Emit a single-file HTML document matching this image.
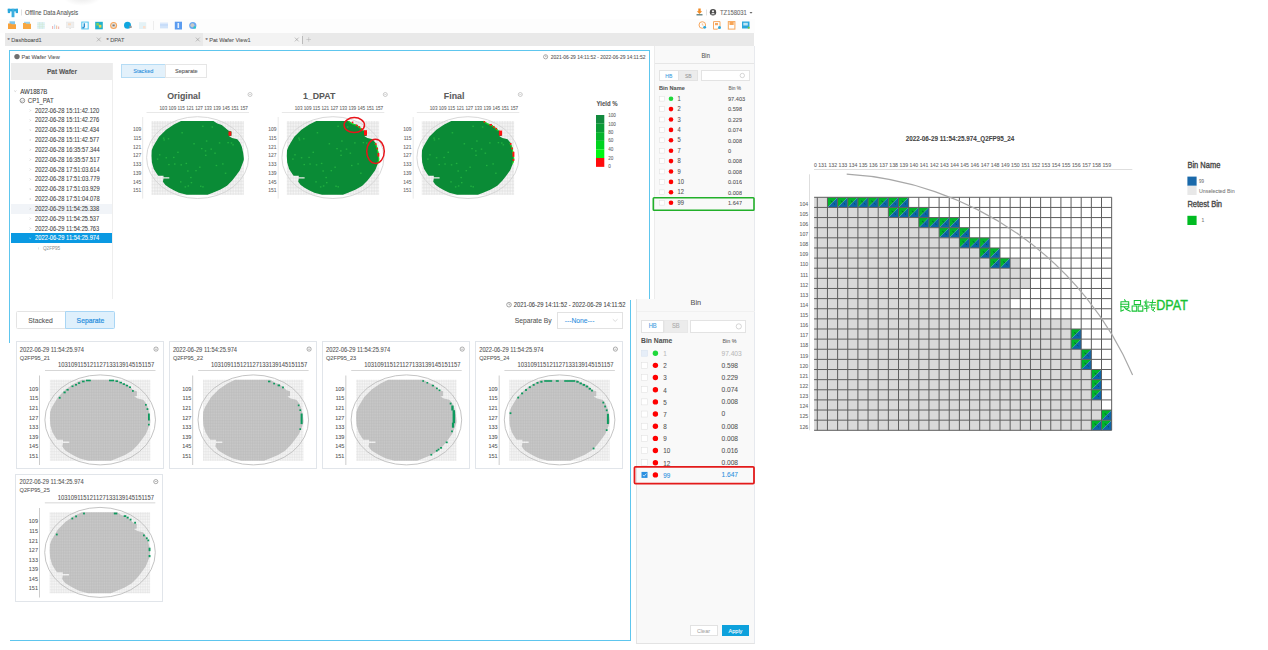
<!DOCTYPE html><html><head><meta charset="utf-8"><style>
html,body{margin:0;padding:0;}
body{width:1268px;height:650px;overflow:hidden;position:relative;background:#fff;font-family:"Liberation Sans",sans-serif;}
.t{position:absolute;white-space:nowrap;-webkit-text-stroke:0.07px currentColor;transform:scaleY(1.1);transform-origin:50% 55%;}
.r{position:absolute;}
svg{position:absolute;left:0;top:0;}
</style></head><body>
<div class="r" style="left:62px;top:-14px;width:40px;height:20px;border-radius:50%;background:radial-gradient(ellipse at center, rgba(0,0,0,0.10), rgba(0,0,0,0) 70%);"></div>
<svg width="1268" height="650" style="position:absolute;left:0;top:0"><rect x="7.8" y="8.8" width="10.2" height="2.6" fill="#2aa7dc"/><rect x="11.6" y="8.8" width="2.8" height="8.4" fill="#2aa7dc"/><rect x="7.8" y="8.8" width="2.3" height="4.3" fill="#2aa7dc"/><rect x="15.7" y="8.8" width="2.3" height="4.3" fill="#2aa7dc"/><rect x="12.9" y="8.8" width="0.25" height="8.4" fill="#bfe5f5"/><rect x="21" y="9.5" width="0.6" height="6" fill="#ccc"/></svg>
<div class="t" style="left:25px;top:9.83px;font-size:5.78px;color:#555;font-weight:normal;line-height:6.94px;">Offline Data Analysis</div>
<div class="r" style="left:0px;top:18.6px;width:755px;height:14.6px;background:#fdfdfd;"></div>
<svg width="1268" height="650" style="position:absolute;left:0;top:0"><path d="M698.3 8.6 h2.4 v2.6 h1.5 l-2.7 2.7 l-2.7 -2.7 h1.5z" fill="#f08a24"/><rect x="696.5" y="14.2" width="6" height="1.2" fill="#4a7070"/><rect x="706.3" y="9.5" width="0.6" height="6" fill="#ccc"/><circle cx="713" cy="12.3" r="3.2" fill="#4d4d4d"/><circle cx="713" cy="11.3" r="1.1" fill="#f4f4f4"/><path d="M710.9 14.2 q2.1 -2.6 4.2 0z" fill="#f4f4f4"/><path d="M749.5 12 h3 l-1.5 1.8z" fill="#666"/></svg>
<div class="t" style="left:720px;top:9.68px;font-size:5.87px;color:#666;font-weight:normal;line-height:7.04px;">TZ158031</div>
<svg width="1268" height="650" style="position:absolute;left:0;top:0"><rect x="9.5" y="21.3" width="5.5" height="3.5" fill="#7cc6ee"/><path d="M8 23.5 h3 l0.8 0.8 h4.2 v4.8 h-8z" fill="#f7a13a"/><rect x="24" y="21.8" width="6" height="2.5" fill="#9ad3ee"/><path d="M23 23 h2.5 l0.8 0.8 h4.7 v5.2 h-8z" fill="#f7a741"/><rect x="37.2" y="22" width="7.6" height="7" fill="#dff1f8"/><path d="M39.7 22 v7 M42.3 22 v7 M37.2 24.3 h7.6 M37.2 26.7 h7.6" stroke="#cde8c8" stroke-width="0.5"/><rect x="52" y="26" width="1.2" height="3" fill="#f1b8b8"/><rect x="54" y="24.5" width="1.2" height="4.5" fill="#c9dcef"/><rect x="56" y="25.5" width="1.2" height="3.5" fill="#f3c9a9"/><rect x="58" y="26.5" width="1.2" height="2.5" fill="#f1b8b8"/><rect x="66.3" y="22" width="7.6" height="5.8" fill="#eeeeee" stroke="#e0e0e0" stroke-width="0.4"/><rect x="68" y="23.3" width="3" height="2" fill="#f7dcc4"/><rect x="69.3" y="28" width="1.6" height="1" fill="#e3e3e3"/><rect x="81.3" y="21.6" width="7.4" height="7.8" fill="#48c3ef"/><rect x="82.3" y="22.5" width="5.4" height="6" fill="#f4fbfe"/><rect x="83.6" y="23.3" width="1.4" height="4" fill="#2a8fd0"/><rect x="82.3" y="26.8" width="2" height="1.7" fill="#2a8fd0"/><rect x="95.2" y="21.8" width="7.6" height="7.5" fill="#1fb0cf"/><rect x="96.3" y="23" width="2.6" height="2.6" fill="#7ccf5a"/><rect x="98.8" y="24.8" width="2.6" height="2.8" fill="#e6d84a"/><circle cx="113.6" cy="25.5" r="3.5" fill="#f7a55a"/><circle cx="113.6" cy="25.5" r="2.4" fill="#e8e2da"/><rect x="112.5" y="24.5" width="2.2" height="1.8" fill="#777"/><circle cx="127.5" cy="25.3" r="3.5" fill="#10a6df"/><rect x="129.3" y="25.8" width="2.4" height="2.2" fill="#9a9a9a"/><rect x="139" y="22.2" width="7.2" height="6.8" fill="#e4f2f6"/><rect x="143" y="26" width="2.5" height="2.5" fill="#fbe0cf"/><rect x="153.2" y="21" width="0.6" height="9" fill="#e3e3e3"/><rect x="160" y="22.5" width="8" height="6" fill="#dbe9fc"/><rect x="160" y="24.5" width="8" height="1" fill="#b6d2f6"/><rect x="160" y="26.6" width="8" height="0.8" fill="#c6dcf8"/><rect x="174.8" y="21.7" width="7.2" height="7.8" fill="#5b9cf0"/><rect x="177.5" y="23" width="1.6" height="5" fill="#e6f0fd"/><circle cx="192.8" cy="25.5" r="3.6" fill="#6aa8f2"/><circle cx="192.4" cy="25.3" r="2" fill="#c8c8c8"/><rect x="193.5" y="26.5" width="2.4" height="2" fill="#2cc9c0"/><circle cx="702.3" cy="25" r="3.3" fill="none" stroke="#f7a860" stroke-width="1"/><path d="M702.3 23.3 v1.8 h1.3" stroke="#f7a860" stroke-width="0.6" fill="none"/><circle cx="704.7" cy="27.3" r="1.4" fill="#2aa7dc"/><path d="M713.5 21.6 h6.5 v5 l-2.5 2.6 h-4z" fill="none" stroke="#f7a860" stroke-width="1"/><rect x="715" y="23" width="3" height="2.2" fill="#f7a860"/><circle cx="719.5" cy="27.5" r="1.5" fill="#2aa7dc"/><rect x="728.3" y="21.6" width="6.6" height="7.5" fill="none" stroke="#f7a557" stroke-width="1"/><rect x="729.5" y="22" width="4.2" height="3" fill="#f7a557"/><rect x="742" y="21.5" width="7.5" height="7" fill="#2aa7dc"/><rect x="743.3" y="22.8" width="4.5" height="2.7" fill="#bfe6f6"/><rect x="747.8" y="26.8" width="1.8" height="1.8" fill="#7c3"/></svg>
<div class="r" style="left:5px;top:33.3px;width:749px;height:12.7px;background:#e9e9e9;"></div>
<div class="r" style="left:203.3px;top:33.3px;width:99px;height:12.7px;background:#f3f3f3;"></div>
<div class="t" style="left:7.5px;top:36.84px;font-size:5.6px;color:#555;font-weight:normal;line-height:6.72px;">* Dashboard1</div>
<div class="t" style="left:106.5px;top:36.84px;font-size:5.6px;color:#555;font-weight:normal;line-height:6.72px;">* DPAT</div>
<div class="t" style="left:205.5px;top:36.84px;font-size:5.6px;color:#555;font-weight:normal;line-height:6.72px;">* Pat Wafer View1</div>
<svg width="1268" height="650" style="position:absolute;left:0;top:0"><path d="M96.89999999999999 37.6 l3.8 3.8 M100.7 37.6 l-3.8 3.8" stroke="#8f8f8f" stroke-width="0.55"/><path d="M195.9 37.6 l3.8 3.8 M199.70000000000002 37.6 l-3.8 3.8" stroke="#8f8f8f" stroke-width="0.55"/><path d="M294.90000000000003 37.6 l3.8 3.8 M298.7 37.6 l-3.8 3.8" stroke="#8f8f8f" stroke-width="0.55"/><path d="M308.7 37.2 v4.6 M306.4 39.5 h4.6" stroke="#b0b0b0" stroke-width="0.5"/></svg>
<div class="r" style="left:302px;top:35.5px;width:0.7px;height:8px;background:#bbb;"></div>
<div class="r" style="left:9.2px;top:49.9px;width:641.2px;height:1.3px;background:#5ec6ee;border-top-left-radius:1.5px;border-top-right-radius:1.5px;"></div>
<div class="r" style="left:9.2px;top:49.9px;width:1.3px;height:293.5px;background:#5ec6ee;"></div>
<div class="r" style="left:649.2px;top:49.9px;width:1.3px;height:249.6px;background:#5ec6ee;"></div>
<svg width="1268" height="650" style="position:absolute;left:0;top:0"><circle cx="17" cy="56.6" r="2.7" fill="#707070"/></svg>
<div class="t" style="left:21.5px;top:54.44px;font-size:5.6px;color:#555;font-weight:normal;line-height:6.72px;">Pat Wafer View</div>
<div class="r" style="left:11px;top:63.3px;width:102px;height:16.7px;background:#ececec;"></div>
<div class="t" style="left:-238px;width:600px;text-align:center;top:68.44px;font-size:6.6px;color:#555;font-weight:bold;line-height:7.92px;">Pat Wafer</div>
<div class="r" style="left:112.3px;top:63.3px;width:0.8px;height:236px;background:#eee;"></div>
<svg width="1268" height="650" style="position:absolute;left:0;top:0"><path d="M14.2 90.6 l1.1 1 l1.1 -1" fill="none" stroke="#aaa" stroke-width="0.5"/></svg>
<div class="t" style="left:20.2px;top:87.94px;font-size:6.1px;color:#3a3a3a;font-weight:normal;line-height:7.32px;">AW1887B</div>
<svg width="1268" height="650" style="position:absolute;left:0;top:0"><circle cx="22.4" cy="100.6" r="2.3" fill="none" stroke="#8a8a8a" stroke-width="0.9"/><path d="M21.2 100.8 l0.9 0.9 l1.6 -1.8" stroke="#8a8a8a" stroke-width="0.6" fill="none"/></svg>
<div class="t" style="left:27.8px;top:97.60px;font-size:6px;color:#444;font-weight:normal;line-height:7.20px;">CP1_PAT</div>
<svg width="1268" height="650" style="position:absolute;left:0;top:0"><path d="M29.8 109.60 l0.9 0.9 l-0.9 0.9" fill="none" stroke="#b0b0b0" stroke-width="0.55"/></svg>
<div class="t" style="left:35.1px;top:107.65px;font-size:5.75px;color:#444;font-weight:normal;line-height:6.90px;">2022-06-28 15:11:42.120</div>
<svg width="1268" height="650" style="position:absolute;left:0;top:0"><path d="M29.8 119.43 l0.9 0.9 l-0.9 0.9" fill="none" stroke="#b0b0b0" stroke-width="0.55"/></svg>
<div class="t" style="left:35.1px;top:117.48px;font-size:5.75px;color:#444;font-weight:normal;line-height:6.90px;">2022-06-28 15:11:42.276</div>
<svg width="1268" height="650" style="position:absolute;left:0;top:0"><path d="M29.8 129.26 l0.9 0.9 l-0.9 0.9" fill="none" stroke="#b0b0b0" stroke-width="0.55"/></svg>
<div class="t" style="left:35.1px;top:127.31px;font-size:5.75px;color:#444;font-weight:normal;line-height:6.90px;">2022-06-28 15:11:42.434</div>
<svg width="1268" height="650" style="position:absolute;left:0;top:0"><path d="M29.8 139.09 l0.9 0.9 l-0.9 0.9" fill="none" stroke="#b0b0b0" stroke-width="0.55"/></svg>
<div class="t" style="left:35.1px;top:137.14px;font-size:5.75px;color:#444;font-weight:normal;line-height:6.90px;">2022-06-28 15:11:42.577</div>
<svg width="1268" height="650" style="position:absolute;left:0;top:0"><path d="M29.8 148.92 l0.9 0.9 l-0.9 0.9" fill="none" stroke="#b0b0b0" stroke-width="0.55"/></svg>
<div class="t" style="left:35.1px;top:146.97px;font-size:5.75px;color:#444;font-weight:normal;line-height:6.90px;">2022-06-28 16:35:57.344</div>
<svg width="1268" height="650" style="position:absolute;left:0;top:0"><path d="M29.8 158.75 l0.9 0.9 l-0.9 0.9" fill="none" stroke="#b0b0b0" stroke-width="0.55"/></svg>
<div class="t" style="left:35.1px;top:156.80px;font-size:5.75px;color:#444;font-weight:normal;line-height:6.90px;">2022-06-28 16:35:57.517</div>
<svg width="1268" height="650" style="position:absolute;left:0;top:0"><path d="M29.8 168.58 l0.9 0.9 l-0.9 0.9" fill="none" stroke="#b0b0b0" stroke-width="0.55"/></svg>
<div class="t" style="left:35.1px;top:166.63px;font-size:5.75px;color:#444;font-weight:normal;line-height:6.90px;">2022-06-28 17:51:03.614</div>
<svg width="1268" height="650" style="position:absolute;left:0;top:0"><path d="M29.8 178.41 l0.9 0.9 l-0.9 0.9" fill="none" stroke="#b0b0b0" stroke-width="0.55"/></svg>
<div class="t" style="left:35.1px;top:176.46px;font-size:5.75px;color:#444;font-weight:normal;line-height:6.90px;">2022-06-28 17:51:03.779</div>
<svg width="1268" height="650" style="position:absolute;left:0;top:0"><path d="M29.8 188.24 l0.9 0.9 l-0.9 0.9" fill="none" stroke="#b0b0b0" stroke-width="0.55"/></svg>
<div class="t" style="left:35.1px;top:186.29px;font-size:5.75px;color:#444;font-weight:normal;line-height:6.90px;">2022-06-28 17:51:03.929</div>
<svg width="1268" height="650" style="position:absolute;left:0;top:0"><path d="M29.8 198.07 l0.9 0.9 l-0.9 0.9" fill="none" stroke="#b0b0b0" stroke-width="0.55"/></svg>
<div class="t" style="left:35.1px;top:196.12px;font-size:5.75px;color:#444;font-weight:normal;line-height:6.90px;">2022-06-28 17:51:04.078</div>
<div class="r" style="left:10.7px;top:204.0px;width:101.6px;height:9.5px;background:#f1f4f8;"></div>
<svg width="1268" height="650" style="position:absolute;left:0;top:0"><path d="M29.8 207.90 l0.9 0.9 l-0.9 0.9" fill="none" stroke="#b0b0b0" stroke-width="0.55"/></svg>
<div class="t" style="left:35.1px;top:205.95px;font-size:5.75px;color:#444;font-weight:normal;line-height:6.90px;">2022-06-29 11:54:25.338</div>
<svg width="1268" height="650" style="position:absolute;left:0;top:0"><path d="M29.8 217.73 l0.9 0.9 l-0.9 0.9" fill="none" stroke="#b0b0b0" stroke-width="0.55"/></svg>
<div class="t" style="left:35.1px;top:215.78px;font-size:5.75px;color:#444;font-weight:normal;line-height:6.90px;">2022-06-29 11:54:25.537</div>
<svg width="1268" height="650" style="position:absolute;left:0;top:0"><path d="M29.8 227.56 l0.9 0.9 l-0.9 0.9" fill="none" stroke="#b0b0b0" stroke-width="0.55"/></svg>
<div class="t" style="left:35.1px;top:225.61px;font-size:5.75px;color:#444;font-weight:normal;line-height:6.90px;">2022-06-29 11:54:25.763</div>
<div class="r" style="left:10.7px;top:233.49px;width:101.6px;height:9.8px;background:#0a99e2;"></div>
<svg width="1268" height="650" style="position:absolute;left:0;top:0"><path d="M29.2 237.89 l1 0.9 l1 -0.9" fill="none" stroke="#d8eefa" stroke-width="0.55"/></svg>
<div class="t" style="left:35.1px;top:235.44px;font-size:5.75px;color:#fff;font-weight:normal;line-height:6.90px;">2022-06-29 11:54:25.974</div>
<div class="t" style="left:43px;top:246.24px;font-size:4.6px;color:#999;font-weight:normal;line-height:5.52px;">Q2FP95</div>
<svg width="1268" height="650" style="position:absolute;left:0;top:0"><path d="M38.2 247.6 l0.8 0.8 l-0.8 0.8" fill="none" stroke="#bbb" stroke-width="0.5"/></svg>
<div class="r" style="left:121px;top:63.5px;width:44.5px;height:14.5px;background:#e3f1fb;border:0.8px solid #b5dcf5;box-sizing:border-box;"></div>
<div class="r" style="left:165.3px;top:63.5px;width:42px;height:14.5px;background:#fff;border:0.8px solid #e6e6e6;box-sizing:border-box;"></div>
<div class="t" style="left:-156.7px;width:600px;text-align:center;top:68.24px;font-size:5.6px;color:#2a8fdc;font-weight:normal;line-height:6.72px;">Stacked</div>
<div class="t" style="left:-113.69999999999999px;width:600px;text-align:center;top:68.24px;font-size:5.6px;color:#555;font-weight:normal;line-height:6.72px;">Separate</div>
<svg width="1268" height="650" style="position:absolute;left:0;top:0"><circle cx="545.6" cy="56.8" r="2.1" fill="none" stroke="#777" stroke-width="0.6"/><path d="M545.6 55.5 v1.3 h1" stroke="#777" stroke-width="0.5" fill="none"/></svg>
<div class="t" style="left:45.5px;width:600px;text-align:right;top:54.54px;font-size:4.93px;color:#555;font-weight:normal;line-height:5.92px;">2021-06-29 14:11:52 - 2022-06-29 14:11:52</div>
<svg width="1268" height="650" style="position:absolute;left:0;top:0"><defs>
<pattern id="fg" width="1.62" height="1.45" patternUnits="userSpaceOnUse"><rect width="1.62" height="1.45" fill="#f8f8f8"/><rect x="0" y="0" width="0.4" height="1.45" fill="#dcdcdc"/><rect x="0" y="0" width="1.62" height="0.35" fill="#dcdcdc"/></pattern>
<pattern id="gg" width="1.75" height="1.55" patternUnits="userSpaceOnUse"><rect width="1.75" height="1.55" fill="#c9c9c9"/><rect x="0" y="0" width="0.4" height="1.55" fill="#b9b9b9"/><rect x="0" y="0" width="1.75" height="0.35" fill="#b9b9b9"/></pattern>
<pattern id="fg2" width="1.75" height="1.55" patternUnits="userSpaceOnUse"><rect width="1.75" height="1.55" fill="#f8f8f8"/><rect x="0" y="0" width="0.4" height="1.55" fill="#dedede"/><rect x="0" y="0" width="1.75" height="0.35" fill="#dedede"/></pattern>
</defs><rect x="151.5" y="121.0" width="92.3" height="73.8" fill="url(#fg)"/><ellipse cx="197.6" cy="157.6" rx="51" ry="40.9" fill="none" stroke="#d4d4d4" stroke-width="0.9"/><path d="M181.00,121.00 L213.40,121.00 L217.30,123.50 L221.80,125.10 L225.10,127.70 L228.30,130.60 L231.50,131.60 L231.50,135.80 L229.00,136.30 L232.20,138.00 L237.30,139.30 L239.90,142.50 L241.90,147.10 L243.20,152.90 L243.80,158.00 L243.80,160.00 L242.50,163.80 L239.90,170.20 L236.10,175.40 L232.20,180.50 L227.00,185.70 L220.50,189.60 L212.80,192.80 L207.60,194.80 L186.80,194.80 L179.00,192.80 L173.80,190.20 L169.30,187.70 L165.40,185.10 L162.90,181.80 L163.50,178.60 L169.30,178.60 L169.30,177.30 L163.50,177.30 L163.50,175.70 L158.30,175.70 L157.00,174.10 L153.80,168.90 L151.90,162.50 L151.50,156.00 L151.70,150.30 L153.20,146.40 L155.80,141.90 L159.00,136.80 L166.10,129.70 L173.90,124.50 Z" fill="#0a8b36"/><rect x="181.39" y="132.13" width="1.5" height="1.3" fill="#22b040"/><rect x="211.58" y="126.35" width="1.5" height="1.3" fill="#22b040"/><rect x="200.96" y="147.99" width="1.5" height="1.3" fill="#22b040"/><rect x="156.85" y="158.45" width="1.5" height="1.3" fill="#22b040"/><rect x="190.68" y="182.02" width="1.5" height="1.3" fill="#22b040"/><rect x="162.93" y="137.48" width="1.5" height="1.3" fill="#22b040"/><rect x="204.77" y="150.28" width="1.5" height="1.3" fill="#22b040"/><rect x="230.74" y="142.37" width="1.5" height="1.3" fill="#22b040"/><rect x="179.97" y="181.23" width="1.5" height="1.3" fill="#22b040"/><rect x="168.18" y="163.92" width="1.5" height="1.3" fill="#22b040"/><rect x="210.47" y="148.48" width="1.5" height="1.3" fill="#22b040"/><rect x="202.06" y="125.63" width="1.5" height="1.3" fill="#22b040"/><rect x="214.30" y="152.56" width="1.5" height="1.3" fill="#22b040"/><rect x="180.50" y="164.21" width="1.5" height="1.3" fill="#22b040"/><rect x="193.33" y="143.12" width="1.5" height="1.3" fill="#22b040"/><rect x="224.82" y="172.59" width="1.5" height="1.3" fill="#22b040"/><rect x="174.03" y="163.39" width="1.5" height="1.3" fill="#22b040"/><rect x="199.98" y="185.59" width="1.5" height="1.3" fill="#22b040"/><rect x="218.83" y="142.25" width="1.5" height="1.3" fill="#22b040"/><rect x="190.09" y="176.88" width="1.5" height="1.3" fill="#22b040"/><rect x="165.53" y="157.09" width="1.5" height="1.3" fill="#22b040"/><rect x="222.07" y="163.29" width="1.5" height="1.3" fill="#22b040"/><rect x="232.31" y="144.15" width="1.5" height="1.3" fill="#22b040"/><rect x="215.68" y="164.86" width="1.5" height="1.3" fill="#22b040"/><rect x="205.02" y="154.67" width="1.5" height="1.3" fill="#22b040"/><rect x="195.26" y="170.01" width="1.5" height="1.3" fill="#22b040"/><rect x="227.36" y="142.00" width="1.5" height="1.3" fill="#22b040"/><rect x="187.11" y="170.35" width="1.5" height="1.3" fill="#22b040"/><rect x="163.44" y="139.27" width="1.5" height="1.3" fill="#22b040"/><rect x="187.58" y="185.31" width="1.5" height="1.3" fill="#22b040"/><rect x="158.94" y="154.15" width="1.5" height="1.3" fill="#22b040"/><rect x="202.21" y="186.19" width="1.5" height="1.3" fill="#22b040"/><rect x="177.20" y="151.65" width="1.5" height="1.3" fill="#22b040"/><rect x="184.61" y="186.25" width="1.5" height="1.3" fill="#22b040"/><rect x="167.76" y="138.12" width="1.5" height="1.3" fill="#22b040"/><rect x="173.04" y="156.79" width="1.5" height="1.3" fill="#22b040"/><rect x="205.88" y="140.39" width="1.5" height="1.3" fill="#22b040"/><rect x="185.58" y="162.80" width="1.5" height="1.3" fill="#22b040"/><rect x="199.08" y="166.58" width="1.5" height="1.3" fill="#22b040"/><rect x="228.5" y="131.5" width="2.8" height="4.2" fill="#ff1010"/><rect x="146.5" y="112.1" width="102.5" height="0.6" fill="#d9d9d9"/><rect x="142.5" y="117" width="0.6" height="81.6" fill="#d9d9d9"/><circle cx="250" cy="94.5" r="2" fill="none" stroke="#aaa" stroke-width="0.6"/><rect x="249" y="94.3" width="2" height="0.45" fill="#aaa"/></svg>
<div class="t" style="left:-116.19999999999999px;width:600px;text-align:center;top:91.22px;font-size:8.8px;color:#5a5a5a;font-weight:bold;line-height:10.56px;">Original</div>
<div class="t" style="left:-96.30000000000001px;width:600px;text-align:center;top:106.42px;font-size:4.63px;color:#666;font-weight:normal;line-height:5.56px;">103 109 115 121 127 133 139 145 151 157</div>
<div class="t" style="left:-458.8px;width:600px;text-align:right;top:127.16px;font-size:4.9px;color:#666;font-weight:normal;line-height:5.88px;">109</div>
<div class="t" style="left:-458.8px;width:600px;text-align:right;top:135.90px;font-size:4.9px;color:#666;font-weight:normal;line-height:5.88px;">115</div>
<div class="t" style="left:-458.8px;width:600px;text-align:right;top:144.64px;font-size:4.9px;color:#666;font-weight:normal;line-height:5.88px;">121</div>
<div class="t" style="left:-458.8px;width:600px;text-align:right;top:153.38px;font-size:4.9px;color:#666;font-weight:normal;line-height:5.88px;">127</div>
<div class="t" style="left:-458.8px;width:600px;text-align:right;top:162.12px;font-size:4.9px;color:#666;font-weight:normal;line-height:5.88px;">133</div>
<div class="t" style="left:-458.8px;width:600px;text-align:right;top:170.86px;font-size:4.9px;color:#666;font-weight:normal;line-height:5.88px;">139</div>
<div class="t" style="left:-458.8px;width:600px;text-align:right;top:179.60px;font-size:4.9px;color:#666;font-weight:normal;line-height:5.88px;">145</div>
<div class="t" style="left:-458.8px;width:600px;text-align:right;top:188.34px;font-size:4.9px;color:#666;font-weight:normal;line-height:5.88px;">151</div>
<svg width="1268" height="650" style="position:absolute;left:0;top:0"><defs>
<pattern id="fg" width="1.62" height="1.45" patternUnits="userSpaceOnUse"><rect width="1.62" height="1.45" fill="#f8f8f8"/><rect x="0" y="0" width="0.4" height="1.45" fill="#dcdcdc"/><rect x="0" y="0" width="1.62" height="0.35" fill="#dcdcdc"/></pattern>
<pattern id="gg" width="1.75" height="1.55" patternUnits="userSpaceOnUse"><rect width="1.75" height="1.55" fill="#c9c9c9"/><rect x="0" y="0" width="0.4" height="1.55" fill="#b9b9b9"/><rect x="0" y="0" width="1.75" height="0.35" fill="#b9b9b9"/></pattern>
<pattern id="fg2" width="1.75" height="1.55" patternUnits="userSpaceOnUse"><rect width="1.75" height="1.55" fill="#f8f8f8"/><rect x="0" y="0" width="0.4" height="1.55" fill="#dedede"/><rect x="0" y="0" width="1.75" height="0.35" fill="#dedede"/></pattern>
</defs><rect x="286.8" y="121.0" width="92.3" height="73.8" fill="url(#fg)"/><ellipse cx="332.9" cy="157.6" rx="51" ry="40.9" fill="none" stroke="#d4d4d4" stroke-width="0.9"/><path d="M316.30,121.00 L348.70,121.00 L352.60,123.50 L357.10,125.10 L360.40,127.70 L363.60,130.60 L366.80,131.60 L366.80,135.80 L364.30,136.30 L367.50,138.00 L372.60,139.30 L375.20,142.50 L377.20,147.10 L378.50,152.90 L379.10,158.00 L379.10,160.00 L377.80,163.80 L375.20,170.20 L371.40,175.40 L367.50,180.50 L362.30,185.70 L355.80,189.60 L348.10,192.80 L342.90,194.80 L322.10,194.80 L314.30,192.80 L309.10,190.20 L304.60,187.70 L300.70,185.10 L298.20,181.80 L298.80,178.60 L304.60,178.60 L304.60,177.30 L298.80,177.30 L298.80,175.70 L293.60,175.70 L292.30,174.10 L289.10,168.90 L287.20,162.50 L286.80,156.00 L287.00,150.30 L288.50,146.40 L291.10,141.90 L294.30,136.80 L301.40,129.70 L309.20,124.50 Z" fill="#0a8b36"/><rect x="316.69" y="132.13" width="1.5" height="1.3" fill="#22b040"/><rect x="346.88" y="126.35" width="1.5" height="1.3" fill="#22b040"/><rect x="336.26" y="147.99" width="1.5" height="1.3" fill="#22b040"/><rect x="292.15" y="158.45" width="1.5" height="1.3" fill="#22b040"/><rect x="325.98" y="182.02" width="1.5" height="1.3" fill="#22b040"/><rect x="298.23" y="137.48" width="1.5" height="1.3" fill="#22b040"/><rect x="340.07" y="150.28" width="1.5" height="1.3" fill="#22b040"/><rect x="366.04" y="142.37" width="1.5" height="1.3" fill="#22b040"/><rect x="315.27" y="181.23" width="1.5" height="1.3" fill="#22b040"/><rect x="303.48" y="163.92" width="1.5" height="1.3" fill="#22b040"/><rect x="345.77" y="148.48" width="1.5" height="1.3" fill="#22b040"/><rect x="337.36" y="125.63" width="1.5" height="1.3" fill="#22b040"/><rect x="349.60" y="152.56" width="1.5" height="1.3" fill="#22b040"/><rect x="315.80" y="164.21" width="1.5" height="1.3" fill="#22b040"/><rect x="328.63" y="143.12" width="1.5" height="1.3" fill="#22b040"/><rect x="360.12" y="172.59" width="1.5" height="1.3" fill="#22b040"/><rect x="309.33" y="163.39" width="1.5" height="1.3" fill="#22b040"/><rect x="335.28" y="185.59" width="1.5" height="1.3" fill="#22b040"/><rect x="354.13" y="142.25" width="1.5" height="1.3" fill="#22b040"/><rect x="325.39" y="176.88" width="1.5" height="1.3" fill="#22b040"/><rect x="300.83" y="157.09" width="1.5" height="1.3" fill="#22b040"/><rect x="357.37" y="163.29" width="1.5" height="1.3" fill="#22b040"/><rect x="367.61" y="144.15" width="1.5" height="1.3" fill="#22b040"/><rect x="350.98" y="164.86" width="1.5" height="1.3" fill="#22b040"/><rect x="340.32" y="154.67" width="1.5" height="1.3" fill="#22b040"/><rect x="330.56" y="170.01" width="1.5" height="1.3" fill="#22b040"/><rect x="362.66" y="142.00" width="1.5" height="1.3" fill="#22b040"/><rect x="322.41" y="170.35" width="1.5" height="1.3" fill="#22b040"/><rect x="298.74" y="139.27" width="1.5" height="1.3" fill="#22b040"/><rect x="322.88" y="185.31" width="1.5" height="1.3" fill="#22b040"/><rect x="294.24" y="154.15" width="1.5" height="1.3" fill="#22b040"/><rect x="337.51" y="186.19" width="1.5" height="1.3" fill="#22b040"/><rect x="312.50" y="151.65" width="1.5" height="1.3" fill="#22b040"/><rect x="319.91" y="186.25" width="1.5" height="1.3" fill="#22b040"/><rect x="303.06" y="138.12" width="1.5" height="1.3" fill="#22b040"/><rect x="308.34" y="156.79" width="1.5" height="1.3" fill="#22b040"/><rect x="341.18" y="140.39" width="1.5" height="1.3" fill="#22b040"/><rect x="320.88" y="162.80" width="1.5" height="1.3" fill="#22b040"/><rect x="334.38" y="166.58" width="1.5" height="1.3" fill="#22b040"/><polyline points="348.30,121.30 352.20,123.80 356.70,125.40 360.00,128.00 363.20,130.90" fill="none" stroke="#1ed81e" stroke-width="1.1"/><polyline points="374.80,142.80 376.80,147.40 378.10,153.20 378.70,158.30 378.70,160.30 377.40,164.10" fill="none" stroke="#1ed81e" stroke-width="1.1"/><rect x="351.8" y="121.6" width="1.5" height="1.5" fill="#ff1010"/><rect x="355.9" y="124.6" width="1.7" height="1.6" fill="#ff1010"/><rect x="358.6" y="126.2" width="1.6" height="1.5" fill="#ff1010"/><rect x="361.1" y="128.2" width="1.5" height="1.5" fill="#ff1010"/><rect x="364.0" y="130.2" width="3" height="5.2" fill="#ff1010"/><rect x="375.1" y="143.3" width="1.6" height="1.6" fill="#ff1010"/><rect x="376.4" y="147.8" width="1.6" height="1.6" fill="#ff1010"/><rect x="377.5" y="153" width="1.8" height="3.6" fill="#ff1010"/><ellipse cx="354.3" cy="125.1" rx="10.2" ry="7.5" fill="none" stroke="#e8141a" stroke-width="1.5"/><ellipse cx="375.5" cy="151.3" rx="8.8" ry="12.1" fill="none" stroke="#e8141a" stroke-width="1.5"/><rect x="281.8" y="112.1" width="102.5" height="0.6" fill="#d9d9d9"/><rect x="277.8" y="117" width="0.6" height="81.6" fill="#d9d9d9"/><circle cx="385.3" cy="94.5" r="2" fill="none" stroke="#aaa" stroke-width="0.6"/><rect x="384.3" y="94.3" width="2" height="0.45" fill="#aaa"/></svg>
<div class="t" style="left:19.100000000000023px;width:600px;text-align:center;top:91.22px;font-size:8.8px;color:#5a5a5a;font-weight:bold;line-height:10.56px;">1_DPAT</div>
<div class="t" style="left:39.0px;width:600px;text-align:center;top:106.42px;font-size:4.63px;color:#666;font-weight:normal;line-height:5.56px;">103 109 115 121 127 133 139 145 151 157</div>
<div class="t" style="left:-323.5px;width:600px;text-align:right;top:127.16px;font-size:4.9px;color:#666;font-weight:normal;line-height:5.88px;">109</div>
<div class="t" style="left:-323.5px;width:600px;text-align:right;top:135.90px;font-size:4.9px;color:#666;font-weight:normal;line-height:5.88px;">115</div>
<div class="t" style="left:-323.5px;width:600px;text-align:right;top:144.64px;font-size:4.9px;color:#666;font-weight:normal;line-height:5.88px;">121</div>
<div class="t" style="left:-323.5px;width:600px;text-align:right;top:153.38px;font-size:4.9px;color:#666;font-weight:normal;line-height:5.88px;">127</div>
<div class="t" style="left:-323.5px;width:600px;text-align:right;top:162.12px;font-size:4.9px;color:#666;font-weight:normal;line-height:5.88px;">133</div>
<div class="t" style="left:-323.5px;width:600px;text-align:right;top:170.86px;font-size:4.9px;color:#666;font-weight:normal;line-height:5.88px;">139</div>
<div class="t" style="left:-323.5px;width:600px;text-align:right;top:179.60px;font-size:4.9px;color:#666;font-weight:normal;line-height:5.88px;">145</div>
<div class="t" style="left:-323.5px;width:600px;text-align:right;top:188.34px;font-size:4.9px;color:#666;font-weight:normal;line-height:5.88px;">151</div>
<svg width="1268" height="650" style="position:absolute;left:0;top:0"><defs>
<pattern id="fg" width="1.62" height="1.45" patternUnits="userSpaceOnUse"><rect width="1.62" height="1.45" fill="#f8f8f8"/><rect x="0" y="0" width="0.4" height="1.45" fill="#dcdcdc"/><rect x="0" y="0" width="1.62" height="0.35" fill="#dcdcdc"/></pattern>
<pattern id="gg" width="1.75" height="1.55" patternUnits="userSpaceOnUse"><rect width="1.75" height="1.55" fill="#c9c9c9"/><rect x="0" y="0" width="0.4" height="1.55" fill="#b9b9b9"/><rect x="0" y="0" width="1.75" height="0.35" fill="#b9b9b9"/></pattern>
<pattern id="fg2" width="1.75" height="1.55" patternUnits="userSpaceOnUse"><rect width="1.75" height="1.55" fill="#f8f8f8"/><rect x="0" y="0" width="0.4" height="1.55" fill="#dedede"/><rect x="0" y="0" width="1.75" height="0.35" fill="#dedede"/></pattern>
</defs><rect x="421.8" y="121.0" width="92.3" height="73.8" fill="url(#fg)"/><ellipse cx="467.9" cy="157.6" rx="51" ry="40.9" fill="none" stroke="#d4d4d4" stroke-width="0.9"/><path d="M451.30,121.00 L483.70,121.00 L487.60,123.50 L492.10,125.10 L495.40,127.70 L498.60,130.60 L501.80,131.60 L501.80,135.80 L499.30,136.30 L502.50,138.00 L507.60,139.30 L510.20,142.50 L512.20,147.10 L513.50,152.90 L514.10,158.00 L514.10,160.00 L512.80,163.80 L510.20,170.20 L506.40,175.40 L502.50,180.50 L497.30,185.70 L490.80,189.60 L483.10,192.80 L477.90,194.80 L457.10,194.80 L449.30,192.80 L444.10,190.20 L439.60,187.70 L435.70,185.10 L433.20,181.80 L433.80,178.60 L439.60,178.60 L439.60,177.30 L433.80,177.30 L433.80,175.70 L428.60,175.70 L427.30,174.10 L424.10,168.90 L422.20,162.50 L421.80,156.00 L422.00,150.30 L423.50,146.40 L426.10,141.90 L429.30,136.80 L436.40,129.70 L444.20,124.50 Z" fill="#0a8b36"/><rect x="451.69" y="132.13" width="1.5" height="1.3" fill="#22b040"/><rect x="481.88" y="126.35" width="1.5" height="1.3" fill="#22b040"/><rect x="471.26" y="147.99" width="1.5" height="1.3" fill="#22b040"/><rect x="427.15" y="158.45" width="1.5" height="1.3" fill="#22b040"/><rect x="460.98" y="182.02" width="1.5" height="1.3" fill="#22b040"/><rect x="433.23" y="137.48" width="1.5" height="1.3" fill="#22b040"/><rect x="475.07" y="150.28" width="1.5" height="1.3" fill="#22b040"/><rect x="501.04" y="142.37" width="1.5" height="1.3" fill="#22b040"/><rect x="450.27" y="181.23" width="1.5" height="1.3" fill="#22b040"/><rect x="438.48" y="163.92" width="1.5" height="1.3" fill="#22b040"/><rect x="480.77" y="148.48" width="1.5" height="1.3" fill="#22b040"/><rect x="472.36" y="125.63" width="1.5" height="1.3" fill="#22b040"/><rect x="484.60" y="152.56" width="1.5" height="1.3" fill="#22b040"/><rect x="450.80" y="164.21" width="1.5" height="1.3" fill="#22b040"/><rect x="463.63" y="143.12" width="1.5" height="1.3" fill="#22b040"/><rect x="495.12" y="172.59" width="1.5" height="1.3" fill="#22b040"/><rect x="444.33" y="163.39" width="1.5" height="1.3" fill="#22b040"/><rect x="470.28" y="185.59" width="1.5" height="1.3" fill="#22b040"/><rect x="489.13" y="142.25" width="1.5" height="1.3" fill="#22b040"/><rect x="460.39" y="176.88" width="1.5" height="1.3" fill="#22b040"/><rect x="435.83" y="157.09" width="1.5" height="1.3" fill="#22b040"/><rect x="492.37" y="163.29" width="1.5" height="1.3" fill="#22b040"/><rect x="502.61" y="144.15" width="1.5" height="1.3" fill="#22b040"/><rect x="485.98" y="164.86" width="1.5" height="1.3" fill="#22b040"/><rect x="475.32" y="154.67" width="1.5" height="1.3" fill="#22b040"/><rect x="465.56" y="170.01" width="1.5" height="1.3" fill="#22b040"/><rect x="497.66" y="142.00" width="1.5" height="1.3" fill="#22b040"/><rect x="457.41" y="170.35" width="1.5" height="1.3" fill="#22b040"/><rect x="433.74" y="139.27" width="1.5" height="1.3" fill="#22b040"/><rect x="457.88" y="185.31" width="1.5" height="1.3" fill="#22b040"/><rect x="429.24" y="154.15" width="1.5" height="1.3" fill="#22b040"/><rect x="472.51" y="186.19" width="1.5" height="1.3" fill="#22b040"/><rect x="447.50" y="151.65" width="1.5" height="1.3" fill="#22b040"/><rect x="454.91" y="186.25" width="1.5" height="1.3" fill="#22b040"/><rect x="438.06" y="138.12" width="1.5" height="1.3" fill="#22b040"/><rect x="443.34" y="156.79" width="1.5" height="1.3" fill="#22b040"/><rect x="476.18" y="140.39" width="1.5" height="1.3" fill="#22b040"/><rect x="455.88" y="162.80" width="1.5" height="1.3" fill="#22b040"/><rect x="469.38" y="166.58" width="1.5" height="1.3" fill="#22b040"/><polyline points="483.30,121.30 487.20,123.80 491.70,125.40 495.00,128.00 498.20,130.90" fill="none" stroke="#1ed81e" stroke-width="1.1"/><polyline points="509.80,142.80 511.80,147.40 513.10,153.20 513.70,158.30 513.70,160.30 512.40,164.10" fill="none" stroke="#1ed81e" stroke-width="1.1"/><rect x="483.6" y="121.0" width="1.6" height="1.6" fill="#ff1010"/><rect x="489.5" y="124.0" width="2.4" height="1.7" fill="#ff1010"/><rect x="492.9" y="126.2" width="1.8" height="1.6" fill="#ff1010"/><rect x="495.5" y="127.9" width="1.6" height="1.5" fill="#ff1010"/><rect x="498.9" y="130.6" width="3.2" height="5" fill="#ff1010"/><rect x="509.9" y="143.0" width="1.6" height="1.8" fill="#ff1010"/><rect x="511.3" y="147.6" width="1.6" height="1.8" fill="#ff1010"/><rect x="512.5" y="151.8" width="1.9" height="5" fill="#ff1010"/><rect x="512.6" y="159" width="1.6" height="2" fill="#ff1010"/><rect x="416.8" y="112.1" width="102.5" height="0.6" fill="#d9d9d9"/><rect x="412.8" y="117" width="0.6" height="81.6" fill="#d9d9d9"/><circle cx="520.3" cy="94.5" r="2" fill="none" stroke="#aaa" stroke-width="0.6"/><rect x="519.3" y="94.3" width="2" height="0.45" fill="#aaa"/></svg>
<div class="t" style="left:154.10000000000002px;width:600px;text-align:center;top:91.22px;font-size:8.8px;color:#5a5a5a;font-weight:bold;line-height:10.56px;">Final</div>
<div class="t" style="left:174.0px;width:600px;text-align:center;top:106.42px;font-size:4.63px;color:#666;font-weight:normal;line-height:5.56px;">103 109 115 121 127 133 139 145 151 157</div>
<div class="t" style="left:-188.5px;width:600px;text-align:right;top:127.16px;font-size:4.9px;color:#666;font-weight:normal;line-height:5.88px;">109</div>
<div class="t" style="left:-188.5px;width:600px;text-align:right;top:135.90px;font-size:4.9px;color:#666;font-weight:normal;line-height:5.88px;">115</div>
<div class="t" style="left:-188.5px;width:600px;text-align:right;top:144.64px;font-size:4.9px;color:#666;font-weight:normal;line-height:5.88px;">121</div>
<div class="t" style="left:-188.5px;width:600px;text-align:right;top:153.38px;font-size:4.9px;color:#666;font-weight:normal;line-height:5.88px;">127</div>
<div class="t" style="left:-188.5px;width:600px;text-align:right;top:162.12px;font-size:4.9px;color:#666;font-weight:normal;line-height:5.88px;">133</div>
<div class="t" style="left:-188.5px;width:600px;text-align:right;top:170.86px;font-size:4.9px;color:#666;font-weight:normal;line-height:5.88px;">139</div>
<div class="t" style="left:-188.5px;width:600px;text-align:right;top:179.60px;font-size:4.9px;color:#666;font-weight:normal;line-height:5.88px;">145</div>
<div class="t" style="left:-188.5px;width:600px;text-align:right;top:188.34px;font-size:4.9px;color:#666;font-weight:normal;line-height:5.88px;">151</div>
<div class="r" style="left:654px;top:46px;width:100.5px;height:253.5px;background:#f9f9f9;"></div>
<div class="r" style="left:654px;top:46px;width:0.7px;height:253.5px;background:#ececec;"></div>
<div class="r" style="left:753.8px;top:46px;width:0.7px;height:253.5px;background:#e8eaee;"></div>
<div class="r" style="left:654.5px;top:63.2px;width:99.5px;height:0.7px;background:#e6e6e6;"></div>
<div class="t" style="left:405.70000000000005px;width:600px;text-align:center;top:52.72px;font-size:5.8px;color:#555;font-weight:normal;line-height:6.96px;">Bin</div>
<div class="r" style="left:659px;top:70px;width:19.5px;height:11px;background:#fff;border:0.7px solid #e3e3e3;box-sizing:border-box;"></div>
<div class="r" style="left:678.3px;top:70px;width:20px;height:11px;background:#ececec;border:0.7px solid #e3e3e3;box-sizing:border-box;"></div>
<div class="t" style="left:368.79999999999995px;width:600px;text-align:center;top:73.10px;font-size:5px;color:#3a9be0;font-weight:normal;line-height:6.00px;">HB</div>
<div class="t" style="left:388.29999999999995px;width:600px;text-align:center;top:73.10px;font-size:5px;color:#999;font-weight:normal;line-height:6.00px;">SB</div>
<div class="r" style="left:701px;top:70px;width:48.5px;height:11px;background:#fff;border:0.7px solid #e3e3e3;box-sizing:border-box;"></div>
<svg width="1268" height="650" style="position:absolute;left:0;top:0"><circle cx="742.3" cy="75.5" r="2.2" fill="none" stroke="#bbb" stroke-width="0.6"/></svg>
<div class="t" style="left:659px;top:85.04px;font-size:5.6px;color:#555;font-weight:bold;line-height:6.72px;">Bin Name</div>
<div class="t" style="left:728.6px;top:85.72px;font-size:4.8px;color:#666;font-weight:normal;line-height:5.76px;">Bin %</div>
<svg width="1268" height="650" style="position:absolute;left:0;top:0"><rect x="659.7" y="96.3" width="4.8" height="4.8" fill="#fff" stroke="#ddd" stroke-width="0.5"/><circle cx="671" cy="98.7" r="2.3" fill="#1ed83a"/><rect x="659.7" y="106.7" width="4.8" height="4.8" fill="#fff" stroke="#ddd" stroke-width="0.5"/><circle cx="671" cy="109.10000000000001" r="2.3" fill="#f00"/><rect x="659.7" y="117.1" width="4.8" height="4.8" fill="#fff" stroke="#ddd" stroke-width="0.5"/><circle cx="671" cy="119.5" r="2.3" fill="#f00"/><rect x="659.7" y="127.5" width="4.8" height="4.8" fill="#fff" stroke="#ddd" stroke-width="0.5"/><circle cx="671" cy="129.9" r="2.3" fill="#f00"/><rect x="659.7" y="137.9" width="4.8" height="4.8" fill="#fff" stroke="#ddd" stroke-width="0.5"/><circle cx="671" cy="140.3" r="2.3" fill="#f00"/><rect x="659.7" y="148.29999999999998" width="4.8" height="4.8" fill="#fff" stroke="#ddd" stroke-width="0.5"/><circle cx="671" cy="150.7" r="2.3" fill="#f00"/><rect x="659.7" y="158.70000000000002" width="4.8" height="4.8" fill="#fff" stroke="#ddd" stroke-width="0.5"/><circle cx="671" cy="161.10000000000002" r="2.3" fill="#f00"/><rect x="659.7" y="169.1" width="4.8" height="4.8" fill="#fff" stroke="#ddd" stroke-width="0.5"/><circle cx="671" cy="171.5" r="2.3" fill="#f00"/><rect x="659.7" y="179.5" width="4.8" height="4.8" fill="#fff" stroke="#ddd" stroke-width="0.5"/><circle cx="671" cy="181.9" r="2.3" fill="#f00"/><rect x="659.7" y="189.9" width="4.8" height="4.8" fill="#fff" stroke="#ddd" stroke-width="0.5"/><circle cx="671" cy="192.3" r="2.3" fill="#f00"/><rect x="659.7" y="200.29999999999998" width="4.8" height="4.8" fill="#fff" stroke="#ddd" stroke-width="0.5"/><circle cx="671" cy="202.7" r="2.3" fill="#f00"/><rect x="653.3" y="197.7" width="100.7" height="12.5" fill="none" stroke="#22b02a" stroke-width="1.6" rx="0.8"/></svg>
<div class="t" style="left:677.5px;top:95.82px;font-size:5.8px;color:#555;font-weight:normal;line-height:6.96px;">1</div>
<div class="t" style="left:728px;top:95.94px;font-size:5.6px;color:#555;font-weight:normal;line-height:6.72px;">97.403</div>
<div class="t" style="left:677.5px;top:106.22px;font-size:5.8px;color:#555;font-weight:normal;line-height:6.96px;">2</div>
<div class="t" style="left:728px;top:106.34px;font-size:5.6px;color:#555;font-weight:normal;line-height:6.72px;">0.598</div>
<div class="t" style="left:677.5px;top:116.62px;font-size:5.8px;color:#555;font-weight:normal;line-height:6.96px;">3</div>
<div class="t" style="left:728px;top:116.74px;font-size:5.6px;color:#555;font-weight:normal;line-height:6.72px;">0.229</div>
<div class="t" style="left:677.5px;top:127.02px;font-size:5.8px;color:#555;font-weight:normal;line-height:6.96px;">4</div>
<div class="t" style="left:728px;top:127.14px;font-size:5.6px;color:#555;font-weight:normal;line-height:6.72px;">0.074</div>
<div class="t" style="left:677.5px;top:137.42px;font-size:5.8px;color:#555;font-weight:normal;line-height:6.96px;">5</div>
<div class="t" style="left:728px;top:137.54px;font-size:5.6px;color:#555;font-weight:normal;line-height:6.72px;">0.008</div>
<div class="t" style="left:677.5px;top:147.82px;font-size:5.8px;color:#555;font-weight:normal;line-height:6.96px;">7</div>
<div class="t" style="left:728px;top:147.94px;font-size:5.6px;color:#555;font-weight:normal;line-height:6.72px;">0</div>
<div class="t" style="left:677.5px;top:158.22px;font-size:5.8px;color:#555;font-weight:normal;line-height:6.96px;">8</div>
<div class="t" style="left:728px;top:158.34px;font-size:5.6px;color:#555;font-weight:normal;line-height:6.72px;">0.008</div>
<div class="t" style="left:677.5px;top:168.62px;font-size:5.8px;color:#555;font-weight:normal;line-height:6.96px;">9</div>
<div class="t" style="left:728px;top:168.74px;font-size:5.6px;color:#555;font-weight:normal;line-height:6.72px;">0.008</div>
<div class="t" style="left:677.5px;top:179.02px;font-size:5.8px;color:#555;font-weight:normal;line-height:6.96px;">10</div>
<div class="t" style="left:728px;top:179.14px;font-size:5.6px;color:#555;font-weight:normal;line-height:6.72px;">0.016</div>
<div class="t" style="left:677.5px;top:189.42px;font-size:5.8px;color:#555;font-weight:normal;line-height:6.96px;">12</div>
<div class="t" style="left:728px;top:189.54px;font-size:5.6px;color:#555;font-weight:normal;line-height:6.72px;">0.008</div>
<div class="t" style="left:677.5px;top:199.82px;font-size:5.8px;color:#555;font-weight:normal;line-height:6.96px;">99</div>
<div class="t" style="left:728px;top:199.94px;font-size:5.6px;color:#555;font-weight:normal;line-height:6.72px;">1.647</div>
<div class="r" style="left:629.7px;top:299.5px;width:1.3px;height:341.3px;background:#5ec6ee;"></div>
<div class="r" style="left:10px;top:639.5px;width:621px;height:1.3px;background:#5ec6ee;"></div>
<div class="r" style="left:15.5px;top:311.4px;width:50px;height:17.3px;background:#fff;border:0.8px solid #e4e4e4;box-sizing:border-box;border-radius:1.5px 0 0 1.5px;"></div>
<div class="r" style="left:65.3px;top:311.4px;width:50.2px;height:17.3px;background:#dff0fc;border:0.8px solid #a9d6f5;box-sizing:border-box;border-radius:0 1.5px 1.5px 0;"></div>
<div class="t" style="left:-259.5px;width:600px;text-align:center;top:316.72px;font-size:6.8px;color:#555;font-weight:normal;line-height:8.16px;">Stacked</div>
<div class="t" style="left:-209.6px;width:600px;text-align:center;top:316.72px;font-size:6.8px;color:#2a90e0;font-weight:normal;line-height:8.16px;-webkit-text-stroke:0.2px #2a90e0;">Separate</div>
<svg width="1268" height="650" style="position:absolute;left:0;top:0"><circle cx="509" cy="304.7" r="2.3" fill="none" stroke="#777" stroke-width="0.65"/><path d="M509 303.3 v1.5 h1.1" stroke="#777" stroke-width="0.55" fill="none"/></svg>
<div class="t" style="left:25.5px;width:600px;text-align:right;top:301.93px;font-size:5.79px;color:#444;font-weight:normal;line-height:6.95px;">2021-06-29 14:11:52 - 2022-06-29 14:11:52</div>
<div class="t" style="left:514.8px;top:316.88px;font-size:6.7px;color:#555;font-weight:normal;line-height:8.04px;">Separate By</div>
<div class="r" style="left:557.4px;top:311.8px;width:66px;height:17.5px;background:#fff;border:0.8px solid #e2e2e2;box-sizing:border-box;"></div>
<div class="t" style="left:564.7px;top:317.14px;font-size:6.77px;color:#2a8ee0;font-weight:normal;line-height:8.12px;">---None---</div>
<svg width="1268" height="650" style="position:absolute;left:0;top:0"><path d="M612.8 319.2 l2.4 2.2 l2.4 -2.2" fill="none" stroke="#c4c4c4" stroke-width="0.6"/></svg>
<div class="r" style="left:15.6px;top:341.2px;width:148px;height:128px;background:#fff;border:0.8px solid #e1e5ea;box-sizing:border-box;"></div>
<svg width="1268" height="650" style="position:absolute;left:0;top:0"><defs>
<pattern id="fg" width="1.62" height="1.45" patternUnits="userSpaceOnUse"><rect width="1.62" height="1.45" fill="#f8f8f8"/><rect x="0" y="0" width="0.4" height="1.45" fill="#dcdcdc"/><rect x="0" y="0" width="1.62" height="0.35" fill="#dcdcdc"/></pattern>
<pattern id="gg" width="1.75" height="1.55" patternUnits="userSpaceOnUse"><rect width="1.75" height="1.55" fill="#c9c9c9"/><rect x="0" y="0" width="0.4" height="1.55" fill="#b9b9b9"/><rect x="0" y="0" width="1.75" height="0.35" fill="#b9b9b9"/></pattern>
<pattern id="fg2" width="1.75" height="1.55" patternUnits="userSpaceOnUse"><rect width="1.75" height="1.55" fill="#f8f8f8"/><rect x="0" y="0" width="0.4" height="1.55" fill="#dedede"/><rect x="0" y="0" width="1.75" height="0.35" fill="#dedede"/></pattern>
</defs><rect x="49.9" y="379.7" width="100.4" height="81.1" fill="url(#fg2)"/><path d="M81.99,379.70 L117.23,379.70 L121.48,382.45 L126.36,384.21 L129.96,387.06 L133.44,390.25 L136.92,391.35 L136.92,395.96 L134.21,396.51 L137.68,398.39 L143.23,399.81 L146.05,403.32 L148.23,408.39 L149.65,414.75 L150.30,420.36 L150.30,422.56 L148.88,426.73 L146.05,433.77 L141.93,439.48 L137.68,445.08 L132.03,450.80 L124.96,455.08 L116.58,458.60 L110.92,460.80 L88.29,460.80 L79.81,458.60 L74.16,455.75 L69.26,453.00 L65.02,450.14 L62.30,446.51 L62.95,443.00 L69.26,443.00 L69.26,441.57 L62.95,441.57 L62.95,439.81 L57.30,439.81 L55.88,438.05 L52.40,432.34 L50.33,425.30 L49.90,418.17 L50.12,411.90 L51.75,407.61 L54.58,402.67 L58.06,397.06 L65.78,389.26 L74.27,383.54 Z" fill="url(#gg)"/><rect x="58.80" y="396.90" width="1.8" height="1.8" fill="#0d9a5e"/><rect x="63.50" y="391.50" width="2.2" height="1.8" fill="#0d9a5e"/><rect x="66.50" y="389.00" width="2.2" height="1.6" fill="#0d9a5e"/><rect x="71.50" y="385.50" width="2" height="1.6" fill="#0d9a5e"/><rect x="75.00" y="384.00" width="2" height="1.6" fill="#0d9a5e"/><rect x="78.00" y="382.30" width="2.2" height="1.6" fill="#0d9a5e"/><rect x="82.00" y="380.70" width="2.6" height="1.6" fill="#0d9a5e"/><rect x="86.00" y="379.70" width="4.8" height="1.6" fill="#0d9a5e"/><rect x="109.00" y="379.70" width="5" height="1.6" fill="#0d9a5e"/><rect x="115.50" y="380.40" width="2.5" height="1.6" fill="#0d9a5e"/><rect x="119.50" y="381.80" width="2.5" height="1.6" fill="#0d9a5e"/><rect x="122.70" y="383.30" width="2.3" height="1.6" fill="#0d9a5e"/><rect x="125.80" y="384.80" width="2.3" height="1.6" fill="#0d9a5e"/><rect x="129.00" y="386.40" width="2" height="1.6" fill="#0d9a5e"/><rect x="132.00" y="390.10" width="1.8" height="1.7" fill="#0d9a5e"/><rect x="145.00" y="404.00" width="1.7" height="1.7" fill="#0d9a5e"/><rect x="146.60" y="408.20" width="1.7" height="1.8" fill="#0d9a5e"/><rect x="148.00" y="413.50" width="1.8" height="7" fill="#0d9a5e"/><rect x="148.00" y="423.80" width="1.7" height="1.7" fill="#0d9a5e"/><ellipse cx="100.19999999999999" cy="419.9" rx="55.3" ry="45" fill="none" stroke="#bdbdbd" stroke-width="0.9"/><rect x="45.0" y="370.09999999999997" width="110.5" height="0.6" fill="#bbb"/><rect x="39.4" y="375.5" width="0.6" height="89.5" fill="#aaa"/><circle cx="156.0" cy="349.09999999999997" r="2.1" fill="none" stroke="#777" stroke-width="0.6"/><rect x="155.0" y="348.84999999999997" width="2" height="0.5" fill="#777"/></svg>
<div class="t" style="left:19.8px;top:346.74px;font-size:5.76px;color:#555;font-weight:normal;line-height:6.91px;">2022-06-29 11:54:25.974</div>
<div class="t" style="left:19.8px;top:354.74px;font-size:5.6px;color:#555;font-weight:normal;line-height:6.72px;">Q2FP95_21</div>
<div class="t" style="left:-193.9px;width:600px;text-align:center;top:362.29px;font-size:5.85px;color:#555;font-weight:normal;line-height:7.02px;">103109115121127133139145151157</div>
<div class="t" style="left:-561.8px;width:600px;text-align:right;top:385.90px;font-size:5.5px;color:#555;font-weight:normal;line-height:6.60px;">109</div>
<div class="t" style="left:-561.8px;width:600px;text-align:right;top:395.45px;font-size:5.5px;color:#555;font-weight:normal;line-height:6.60px;">115</div>
<div class="t" style="left:-561.8px;width:600px;text-align:right;top:405.00px;font-size:5.5px;color:#555;font-weight:normal;line-height:6.60px;">121</div>
<div class="t" style="left:-561.8px;width:600px;text-align:right;top:414.55px;font-size:5.5px;color:#555;font-weight:normal;line-height:6.60px;">127</div>
<div class="t" style="left:-561.8px;width:600px;text-align:right;top:424.10px;font-size:5.5px;color:#555;font-weight:normal;line-height:6.60px;">133</div>
<div class="t" style="left:-561.8px;width:600px;text-align:right;top:433.65px;font-size:5.5px;color:#555;font-weight:normal;line-height:6.60px;">139</div>
<div class="t" style="left:-561.8px;width:600px;text-align:right;top:443.20px;font-size:5.5px;color:#555;font-weight:normal;line-height:6.60px;">145</div>
<div class="t" style="left:-561.8px;width:600px;text-align:right;top:452.75px;font-size:5.5px;color:#555;font-weight:normal;line-height:6.60px;">151</div>
<div class="r" style="left:168.7px;top:341.2px;width:148px;height:128px;background:#fff;border:0.8px solid #e1e5ea;box-sizing:border-box;"></div>
<svg width="1268" height="650" style="position:absolute;left:0;top:0"><defs>
<pattern id="fg" width="1.62" height="1.45" patternUnits="userSpaceOnUse"><rect width="1.62" height="1.45" fill="#f8f8f8"/><rect x="0" y="0" width="0.4" height="1.45" fill="#dcdcdc"/><rect x="0" y="0" width="1.62" height="0.35" fill="#dcdcdc"/></pattern>
<pattern id="gg" width="1.75" height="1.55" patternUnits="userSpaceOnUse"><rect width="1.75" height="1.55" fill="#c9c9c9"/><rect x="0" y="0" width="0.4" height="1.55" fill="#b9b9b9"/><rect x="0" y="0" width="1.75" height="0.35" fill="#b9b9b9"/></pattern>
<pattern id="fg2" width="1.75" height="1.55" patternUnits="userSpaceOnUse"><rect width="1.75" height="1.55" fill="#f8f8f8"/><rect x="0" y="0" width="0.4" height="1.55" fill="#dedede"/><rect x="0" y="0" width="1.75" height="0.35" fill="#dedede"/></pattern>
</defs><rect x="203.0" y="379.7" width="100.4" height="81.1" fill="url(#fg2)"/><path d="M235.09,379.70 L270.33,379.70 L274.58,382.45 L279.46,384.21 L283.06,387.06 L286.54,390.25 L290.02,391.35 L290.02,395.96 L287.31,396.51 L290.78,398.39 L296.33,399.81 L299.15,403.32 L301.33,408.39 L302.75,414.75 L303.40,420.36 L303.40,422.56 L301.98,426.73 L299.15,433.77 L295.03,439.48 L290.78,445.08 L285.13,450.80 L278.06,455.08 L269.68,458.60 L264.02,460.80 L241.39,460.80 L232.91,458.60 L227.26,455.75 L222.36,453.00 L218.12,450.14 L215.40,446.51 L216.05,443.00 L222.36,443.00 L222.36,441.57 L216.05,441.57 L216.05,439.81 L210.40,439.81 L208.98,438.05 L205.50,432.34 L203.43,425.30 L203.00,418.17 L203.22,411.90 L204.85,407.61 L207.68,402.67 L211.16,397.06 L218.88,389.26 L227.37,383.54 Z" fill="url(#gg)"/><rect x="268.00" y="380.70" width="2.4" height="1.6" fill="#0d9a5e"/><rect x="273.20" y="382.80" width="1.8" height="1.6" fill="#0d9a5e"/><rect x="277.60" y="384.50" width="2.4" height="1.8" fill="#0d9a5e"/><rect x="282.10" y="386.50" width="1.8" height="1.8" fill="#0d9a5e"/><rect x="297.80" y="404.50" width="1.7" height="1.7" fill="#0d9a5e"/><rect x="299.40" y="409.30" width="1.7" height="1.7" fill="#0d9a5e"/><rect x="300.60" y="413.50" width="2" height="10.6" fill="#0d9a5e"/><rect x="299.40" y="428.30" width="1.7" height="1.7" fill="#0d9a5e"/><ellipse cx="253.29999999999998" cy="419.9" rx="55.3" ry="45" fill="none" stroke="#bdbdbd" stroke-width="0.9"/><rect x="198.1" y="370.09999999999997" width="110.5" height="0.6" fill="#bbb"/><rect x="192.5" y="375.5" width="0.6" height="89.5" fill="#aaa"/><circle cx="309.1" cy="349.09999999999997" r="2.1" fill="none" stroke="#777" stroke-width="0.6"/><rect x="308.1" y="348.84999999999997" width="2" height="0.5" fill="#777"/></svg>
<div class="t" style="left:172.89999999999998px;top:346.74px;font-size:5.76px;color:#555;font-weight:normal;line-height:6.91px;">2022-06-29 11:54:25.974</div>
<div class="t" style="left:172.89999999999998px;top:354.74px;font-size:5.6px;color:#555;font-weight:normal;line-height:6.72px;">Q2FP95_22</div>
<div class="t" style="left:-40.80000000000001px;width:600px;text-align:center;top:362.29px;font-size:5.85px;color:#555;font-weight:normal;line-height:7.02px;">103109115121127133139145151157</div>
<div class="t" style="left:-408.70000000000005px;width:600px;text-align:right;top:385.90px;font-size:5.5px;color:#555;font-weight:normal;line-height:6.60px;">109</div>
<div class="t" style="left:-408.70000000000005px;width:600px;text-align:right;top:395.45px;font-size:5.5px;color:#555;font-weight:normal;line-height:6.60px;">115</div>
<div class="t" style="left:-408.70000000000005px;width:600px;text-align:right;top:405.00px;font-size:5.5px;color:#555;font-weight:normal;line-height:6.60px;">121</div>
<div class="t" style="left:-408.70000000000005px;width:600px;text-align:right;top:414.55px;font-size:5.5px;color:#555;font-weight:normal;line-height:6.60px;">127</div>
<div class="t" style="left:-408.70000000000005px;width:600px;text-align:right;top:424.10px;font-size:5.5px;color:#555;font-weight:normal;line-height:6.60px;">133</div>
<div class="t" style="left:-408.70000000000005px;width:600px;text-align:right;top:433.65px;font-size:5.5px;color:#555;font-weight:normal;line-height:6.60px;">139</div>
<div class="t" style="left:-408.70000000000005px;width:600px;text-align:right;top:443.20px;font-size:5.5px;color:#555;font-weight:normal;line-height:6.60px;">145</div>
<div class="t" style="left:-408.70000000000005px;width:600px;text-align:right;top:452.75px;font-size:5.5px;color:#555;font-weight:normal;line-height:6.60px;">151</div>
<div class="r" style="left:321.8px;top:341.2px;width:148px;height:128px;background:#fff;border:0.8px solid #e1e5ea;box-sizing:border-box;"></div>
<svg width="1268" height="650" style="position:absolute;left:0;top:0"><defs>
<pattern id="fg" width="1.62" height="1.45" patternUnits="userSpaceOnUse"><rect width="1.62" height="1.45" fill="#f8f8f8"/><rect x="0" y="0" width="0.4" height="1.45" fill="#dcdcdc"/><rect x="0" y="0" width="1.62" height="0.35" fill="#dcdcdc"/></pattern>
<pattern id="gg" width="1.75" height="1.55" patternUnits="userSpaceOnUse"><rect width="1.75" height="1.55" fill="#c9c9c9"/><rect x="0" y="0" width="0.4" height="1.55" fill="#b9b9b9"/><rect x="0" y="0" width="1.75" height="0.35" fill="#b9b9b9"/></pattern>
<pattern id="fg2" width="1.75" height="1.55" patternUnits="userSpaceOnUse"><rect width="1.75" height="1.55" fill="#f8f8f8"/><rect x="0" y="0" width="0.4" height="1.55" fill="#dedede"/><rect x="0" y="0" width="1.75" height="0.35" fill="#dedede"/></pattern>
</defs><rect x="356.1" y="379.7" width="100.4" height="81.1" fill="url(#fg2)"/><path d="M388.19,379.70 L423.43,379.70 L427.68,382.45 L432.56,384.21 L436.16,387.06 L439.64,390.25 L443.12,391.35 L443.12,395.96 L440.41,396.51 L443.88,398.39 L449.43,399.81 L452.25,403.32 L454.43,408.39 L455.85,414.75 L456.50,420.36 L456.50,422.56 L455.08,426.73 L452.25,433.77 L448.13,439.48 L443.88,445.08 L438.23,450.80 L431.16,455.08 L422.78,458.60 L417.12,460.80 L394.49,460.80 L386.01,458.60 L380.36,455.75 L375.46,453.00 L371.22,450.14 L368.50,446.51 L369.15,443.00 L375.46,443.00 L375.46,441.57 L369.15,441.57 L369.15,439.81 L363.50,439.81 L362.08,438.05 L358.60,432.34 L356.53,425.30 L356.10,418.17 L356.32,411.90 L357.95,407.61 L360.78,402.67 L364.26,397.06 L371.98,389.26 L380.47,383.54 Z" fill="url(#gg)"/><rect x="422.30" y="380.20" width="1.7" height="1.6" fill="#0d9a5e"/><rect x="426.50" y="382.00" width="1.7" height="1.6" fill="#0d9a5e"/><rect x="431.80" y="384.80" width="2.2" height="1.6" fill="#0d9a5e"/><rect x="436.00" y="387.60" width="1.8" height="1.6" fill="#0d9a5e"/><rect x="438.70" y="389.50" width="1.7" height="1.6" fill="#0d9a5e"/><rect x="449.70" y="402.70" width="1.8" height="1.8" fill="#0d9a5e"/><rect x="451.30" y="405.50" width="2.3" height="5" fill="#0d9a5e"/><rect x="452.60" y="410.20" width="2.5" height="13" fill="#0d9a5e"/><rect x="451.90" y="422.70" width="2.2" height="5" fill="#0d9a5e"/><rect x="451.10" y="430.50" width="1.8" height="1.7" fill="#0d9a5e"/><rect x="445.70" y="441.50" width="2" height="1.7" fill="#0d9a5e"/><rect x="440.10" y="447.00" width="2" height="1.7" fill="#0d9a5e"/><rect x="437.60" y="448.70" width="1.8" height="1.7" fill="#0d9a5e"/><rect x="435.90" y="449.90" width="1.8" height="1.7" fill="#0d9a5e"/><rect x="430.40" y="453.90" width="1.8" height="1.7" fill="#0d9a5e"/><ellipse cx="406.4" cy="419.9" rx="55.3" ry="45" fill="none" stroke="#bdbdbd" stroke-width="0.9"/><rect x="351.2" y="370.09999999999997" width="110.5" height="0.6" fill="#bbb"/><rect x="345.6" y="375.5" width="0.6" height="89.5" fill="#aaa"/><circle cx="462.20000000000005" cy="349.09999999999997" r="2.1" fill="none" stroke="#777" stroke-width="0.6"/><rect x="461.20000000000005" y="348.84999999999997" width="2" height="0.5" fill="#777"/></svg>
<div class="t" style="left:326.0px;top:346.74px;font-size:5.76px;color:#555;font-weight:normal;line-height:6.91px;">2022-06-29 11:54:25.974</div>
<div class="t" style="left:326.0px;top:354.74px;font-size:5.6px;color:#555;font-weight:normal;line-height:6.72px;">Q2FP95_23</div>
<div class="t" style="left:112.30000000000001px;width:600px;text-align:center;top:362.29px;font-size:5.85px;color:#555;font-weight:normal;line-height:7.02px;">103109115121127133139145151157</div>
<div class="t" style="left:-255.59999999999997px;width:600px;text-align:right;top:385.90px;font-size:5.5px;color:#555;font-weight:normal;line-height:6.60px;">109</div>
<div class="t" style="left:-255.59999999999997px;width:600px;text-align:right;top:395.45px;font-size:5.5px;color:#555;font-weight:normal;line-height:6.60px;">115</div>
<div class="t" style="left:-255.59999999999997px;width:600px;text-align:right;top:405.00px;font-size:5.5px;color:#555;font-weight:normal;line-height:6.60px;">121</div>
<div class="t" style="left:-255.59999999999997px;width:600px;text-align:right;top:414.55px;font-size:5.5px;color:#555;font-weight:normal;line-height:6.60px;">127</div>
<div class="t" style="left:-255.59999999999997px;width:600px;text-align:right;top:424.10px;font-size:5.5px;color:#555;font-weight:normal;line-height:6.60px;">133</div>
<div class="t" style="left:-255.59999999999997px;width:600px;text-align:right;top:433.65px;font-size:5.5px;color:#555;font-weight:normal;line-height:6.60px;">139</div>
<div class="t" style="left:-255.59999999999997px;width:600px;text-align:right;top:443.20px;font-size:5.5px;color:#555;font-weight:normal;line-height:6.60px;">145</div>
<div class="t" style="left:-255.59999999999997px;width:600px;text-align:right;top:452.75px;font-size:5.5px;color:#555;font-weight:normal;line-height:6.60px;">151</div>
<div class="r" style="left:475.0px;top:341.2px;width:148px;height:128px;background:#fff;border:0.8px solid #e1e5ea;box-sizing:border-box;"></div>
<svg width="1268" height="650" style="position:absolute;left:0;top:0"><defs>
<pattern id="fg" width="1.62" height="1.45" patternUnits="userSpaceOnUse"><rect width="1.62" height="1.45" fill="#f8f8f8"/><rect x="0" y="0" width="0.4" height="1.45" fill="#dcdcdc"/><rect x="0" y="0" width="1.62" height="0.35" fill="#dcdcdc"/></pattern>
<pattern id="gg" width="1.75" height="1.55" patternUnits="userSpaceOnUse"><rect width="1.75" height="1.55" fill="#c9c9c9"/><rect x="0" y="0" width="0.4" height="1.55" fill="#b9b9b9"/><rect x="0" y="0" width="1.75" height="0.35" fill="#b9b9b9"/></pattern>
<pattern id="fg2" width="1.75" height="1.55" patternUnits="userSpaceOnUse"><rect width="1.75" height="1.55" fill="#f8f8f8"/><rect x="0" y="0" width="0.4" height="1.55" fill="#dedede"/><rect x="0" y="0" width="1.75" height="0.35" fill="#dedede"/></pattern>
</defs><rect x="509.3" y="379.7" width="100.4" height="81.1" fill="url(#fg2)"/><path d="M541.39,379.70 L576.63,379.70 L580.88,382.45 L585.76,384.21 L589.36,387.06 L592.84,390.25 L596.32,391.35 L596.32,395.96 L593.61,396.51 L597.08,398.39 L602.63,399.81 L605.45,403.32 L607.63,408.39 L609.05,414.75 L609.70,420.36 L609.70,422.56 L608.28,426.73 L605.45,433.77 L601.33,439.48 L597.08,445.08 L591.43,450.80 L584.36,455.08 L575.98,458.60 L570.32,460.80 L547.69,460.80 L539.21,458.60 L533.56,455.75 L528.66,453.00 L524.42,450.14 L521.70,446.51 L522.35,443.00 L528.66,443.00 L528.66,441.57 L522.35,441.57 L522.35,439.81 L516.70,439.81 L515.28,438.05 L511.80,432.34 L509.73,425.30 L509.30,418.17 L509.52,411.90 L511.15,407.61 L513.98,402.67 L517.46,397.06 L525.18,389.26 L533.67,383.54 Z" fill="url(#gg)"/><rect x="517.30" y="396.70" width="1.8" height="1.8" fill="#0d9a5e"/><rect x="521.10" y="392.50" width="2" height="1.8" fill="#0d9a5e"/><rect x="525.00" y="389.10" width="2" height="1.8" fill="#0d9a5e"/><rect x="528.80" y="386.30" width="2" height="1.8" fill="#0d9a5e"/><rect x="532.70" y="384.00" width="2" height="1.8" fill="#0d9a5e"/><rect x="536.50" y="382.00" width="2" height="1.8" fill="#0d9a5e"/><rect x="540.30" y="380.90" width="2.2" height="1.8" fill="#0d9a5e"/><rect x="544.20" y="380.20" width="8" height="1.6" fill="#0d9a5e"/><rect x="555.80" y="380.20" width="3" height="1.6" fill="#0d9a5e"/><rect x="564.20" y="380.20" width="11" height="1.6" fill="#0d9a5e"/><rect x="576.30" y="380.90" width="2.4" height="1.8" fill="#0d9a5e"/><rect x="579.50" y="382.50" width="2.4" height="1.8" fill="#0d9a5e"/><rect x="582.60" y="384.00" width="2.4" height="1.8" fill="#0d9a5e"/><rect x="585.70" y="385.60" width="2.4" height="1.8" fill="#0d9a5e"/><rect x="588.70" y="387.90" width="2.2" height="1.8" fill="#0d9a5e"/><rect x="591.10" y="389.70" width="1.8" height="1.8" fill="#0d9a5e"/><rect x="509.60" y="412.30" width="1.8" height="1.8" fill="#0d9a5e"/><rect x="602.40" y="401.70" width="1.8" height="1.8" fill="#0d9a5e"/><rect x="604.20" y="405.60" width="1.8" height="1.8" fill="#0d9a5e"/><rect x="605.80" y="409.40" width="1.8" height="1.8" fill="#0d9a5e"/><rect x="606.90" y="413.80" width="2" height="10.2" fill="#0d9a5e"/><rect x="605.80" y="429.20" width="1.8" height="1.8" fill="#0d9a5e"/><rect x="592.70" y="447.60" width="1.8" height="1.8" fill="#0d9a5e"/><ellipse cx="559.6" cy="419.9" rx="55.3" ry="45" fill="none" stroke="#bdbdbd" stroke-width="0.9"/><rect x="504.4" y="370.09999999999997" width="110.5" height="0.6" fill="#bbb"/><rect x="498.8" y="375.5" width="0.6" height="89.5" fill="#aaa"/><circle cx="615.4" cy="349.09999999999997" r="2.1" fill="none" stroke="#777" stroke-width="0.6"/><rect x="614.4" y="348.84999999999997" width="2" height="0.5" fill="#777"/></svg>
<div class="t" style="left:479.2px;top:346.74px;font-size:5.76px;color:#555;font-weight:normal;line-height:6.91px;">2022-06-29 11:54:25.974</div>
<div class="t" style="left:479.2px;top:354.74px;font-size:5.6px;color:#555;font-weight:normal;line-height:6.72px;">Q2FP95_24</div>
<div class="t" style="left:265.5px;width:600px;text-align:center;top:362.29px;font-size:5.85px;color:#555;font-weight:normal;line-height:7.02px;">103109115121127133139145151157</div>
<div class="t" style="left:-102.39999999999998px;width:600px;text-align:right;top:385.90px;font-size:5.5px;color:#555;font-weight:normal;line-height:6.60px;">109</div>
<div class="t" style="left:-102.39999999999998px;width:600px;text-align:right;top:395.45px;font-size:5.5px;color:#555;font-weight:normal;line-height:6.60px;">115</div>
<div class="t" style="left:-102.39999999999998px;width:600px;text-align:right;top:405.00px;font-size:5.5px;color:#555;font-weight:normal;line-height:6.60px;">121</div>
<div class="t" style="left:-102.39999999999998px;width:600px;text-align:right;top:414.55px;font-size:5.5px;color:#555;font-weight:normal;line-height:6.60px;">127</div>
<div class="t" style="left:-102.39999999999998px;width:600px;text-align:right;top:424.10px;font-size:5.5px;color:#555;font-weight:normal;line-height:6.60px;">133</div>
<div class="t" style="left:-102.39999999999998px;width:600px;text-align:right;top:433.65px;font-size:5.5px;color:#555;font-weight:normal;line-height:6.60px;">139</div>
<div class="t" style="left:-102.39999999999998px;width:600px;text-align:right;top:443.20px;font-size:5.5px;color:#555;font-weight:normal;line-height:6.60px;">145</div>
<div class="t" style="left:-102.39999999999998px;width:600px;text-align:right;top:452.75px;font-size:5.5px;color:#555;font-weight:normal;line-height:6.60px;">151</div>
<div class="r" style="left:15.4px;top:473.7px;width:148px;height:128px;background:#fff;border:0.8px solid #e1e5ea;box-sizing:border-box;"></div>
<svg width="1268" height="650" style="position:absolute;left:0;top:0"><defs>
<pattern id="fg" width="1.62" height="1.45" patternUnits="userSpaceOnUse"><rect width="1.62" height="1.45" fill="#f8f8f8"/><rect x="0" y="0" width="0.4" height="1.45" fill="#dcdcdc"/><rect x="0" y="0" width="1.62" height="0.35" fill="#dcdcdc"/></pattern>
<pattern id="gg" width="1.75" height="1.55" patternUnits="userSpaceOnUse"><rect width="1.75" height="1.55" fill="#c9c9c9"/><rect x="0" y="0" width="0.4" height="1.55" fill="#b9b9b9"/><rect x="0" y="0" width="1.75" height="0.35" fill="#b9b9b9"/></pattern>
<pattern id="fg2" width="1.75" height="1.55" patternUnits="userSpaceOnUse"><rect width="1.75" height="1.55" fill="#f8f8f8"/><rect x="0" y="0" width="0.4" height="1.55" fill="#dedede"/><rect x="0" y="0" width="1.75" height="0.35" fill="#dedede"/></pattern>
</defs><rect x="49.699999999999996" y="512.2" width="100.4" height="81.1" fill="url(#fg2)"/><path d="M81.79,512.20 L117.03,512.20 L121.28,514.95 L126.16,516.71 L129.76,519.56 L133.24,522.75 L136.72,523.85 L136.72,528.46 L134.01,529.01 L137.48,530.89 L143.03,532.31 L145.85,535.82 L148.03,540.89 L149.45,547.25 L150.10,552.86 L150.10,555.06 L148.68,559.23 L145.85,566.27 L141.73,571.98 L137.48,577.58 L131.83,583.30 L124.76,587.58 L116.38,591.10 L110.72,593.30 L88.09,593.30 L79.61,591.10 L73.96,588.25 L69.06,585.50 L64.82,582.64 L62.10,579.01 L62.75,575.50 L69.06,575.50 L69.06,574.07 L62.75,574.07 L62.75,572.31 L57.10,572.31 L55.68,570.55 L52.20,564.84 L50.13,557.80 L49.70,550.67 L49.92,544.40 L51.55,540.11 L54.38,535.17 L57.86,529.56 L65.58,521.76 L74.07,516.04 Z" fill="url(#gg)"/><rect x="55.90" y="533.60" width="1.8" height="1.8" fill="#0d9a5e"/><rect x="71.40" y="517.60" width="1.8" height="1.8" fill="#0d9a5e"/><rect x="75.20" y="515.50" width="1.8" height="1.8" fill="#0d9a5e"/><rect x="83.10" y="512.60" width="1.8" height="1.8" fill="#0d9a5e"/><rect x="113.80" y="512.60" width="3.5" height="1.8" fill="#0d9a5e"/><rect x="123.70" y="515.20" width="2.6" height="1.8" fill="#0d9a5e"/><rect x="126.70" y="516.70" width="2" height="1.8" fill="#0d9a5e"/><rect x="129.70" y="518.70" width="1.8" height="1.8" fill="#0d9a5e"/><rect x="134.20" y="521.80" width="1.8" height="1.8" fill="#0d9a5e"/><rect x="143.00" y="534.50" width="1.8" height="1.8" fill="#0d9a5e"/><rect x="145.90" y="537.40" width="1.8" height="1.8" fill="#0d9a5e"/><rect x="147.40" y="539.50" width="1.8" height="1.8" fill="#0d9a5e"/><rect x="148.60" y="547.70" width="1.9" height="3.5" fill="#0d9a5e"/><rect x="148.60" y="555.00" width="1.9" height="2.2" fill="#0d9a5e"/><ellipse cx="100.0" cy="552.4" rx="55.3" ry="45" fill="none" stroke="#bdbdbd" stroke-width="0.9"/><rect x="44.8" y="502.59999999999997" width="110.5" height="0.6" fill="#bbb"/><rect x="39.2" y="508.0" width="0.6" height="89.5" fill="#aaa"/><circle cx="155.8" cy="481.59999999999997" r="2.1" fill="none" stroke="#777" stroke-width="0.6"/><rect x="154.8" y="481.34999999999997" width="2" height="0.5" fill="#777"/></svg>
<div class="t" style="left:19.6px;top:479.24px;font-size:5.76px;color:#555;font-weight:normal;line-height:6.91px;">2022-06-29 11:54:25.974</div>
<div class="t" style="left:19.6px;top:487.24px;font-size:5.6px;color:#555;font-weight:normal;line-height:6.72px;">Q2FP95_25</div>
<div class="t" style="left:-194.1px;width:600px;text-align:center;top:494.79px;font-size:5.85px;color:#555;font-weight:normal;line-height:7.02px;">103109115121127133139145151157</div>
<div class="t" style="left:-562.0px;width:600px;text-align:right;top:518.40px;font-size:5.5px;color:#555;font-weight:normal;line-height:6.60px;">109</div>
<div class="t" style="left:-562.0px;width:600px;text-align:right;top:527.95px;font-size:5.5px;color:#555;font-weight:normal;line-height:6.60px;">115</div>
<div class="t" style="left:-562.0px;width:600px;text-align:right;top:537.50px;font-size:5.5px;color:#555;font-weight:normal;line-height:6.60px;">121</div>
<div class="t" style="left:-562.0px;width:600px;text-align:right;top:547.05px;font-size:5.5px;color:#555;font-weight:normal;line-height:6.60px;">127</div>
<div class="t" style="left:-562.0px;width:600px;text-align:right;top:556.60px;font-size:5.5px;color:#555;font-weight:normal;line-height:6.60px;">133</div>
<div class="t" style="left:-562.0px;width:600px;text-align:right;top:566.15px;font-size:5.5px;color:#555;font-weight:normal;line-height:6.60px;">139</div>
<div class="t" style="left:-562.0px;width:600px;text-align:right;top:575.70px;font-size:5.5px;color:#555;font-weight:normal;line-height:6.60px;">145</div>
<div class="t" style="left:-562.0px;width:600px;text-align:right;top:585.25px;font-size:5.5px;color:#555;font-weight:normal;line-height:6.60px;">151</div>
<div class="r" style="left:636px;top:299.3px;width:119px;height:345px;background:#f9f9f9;border-left:0.7px solid #e3e3e3;border-right:0.7px solid #e6e9ee;border-bottom:0.7px solid #e3e3e3;box-sizing:border-box;"></div>
<div class="t" style="left:395.79999999999995px;width:600px;text-align:center;top:299.42px;font-size:7.3px;color:#555;font-weight:normal;line-height:8.76px;">Bin</div>
<div class="r" style="left:636.5px;top:311px;width:118px;height:0.7px;background:#f1f1f1;"></div>
<div class="r" style="left:641.3px;top:319.6px;width:22.8px;height:13px;background:#fff;border:0.7px solid #e3e3e3;box-sizing:border-box;"></div>
<div class="r" style="left:664px;top:319.6px;width:23.7px;height:13px;background:#ececec;border:0.7px solid #e8e8e8;box-sizing:border-box;"></div>
<div class="t" style="left:352.70000000000005px;width:600px;text-align:center;top:323.22px;font-size:5.8px;color:#3a9be0;font-weight:normal;line-height:6.96px;">HB</div>
<div class="t" style="left:375.79999999999995px;width:600px;text-align:center;top:323.22px;font-size:5.8px;color:#aaa;font-weight:normal;line-height:6.96px;">SB</div>
<div class="r" style="left:690px;top:319.6px;width:56px;height:13px;background:#fff;border:0.7px solid #e3e3e3;box-sizing:border-box;"></div>
<svg width="1268" height="650" style="position:absolute;left:0;top:0"><circle cx="738.8" cy="326.4" r="2.6" fill="none" stroke="#bbb" stroke-width="0.6"/></svg>
<div class="t" style="left:641px;top:337.44px;font-size:6.77px;color:#555;font-weight:bold;line-height:8.12px;">Bin Name</div>
<div class="t" style="left:722.5px;top:338.36px;font-size:5.4px;color:#666;font-weight:normal;line-height:6.48px;">Bin %</div>
<svg width="1268" height="650" style="position:absolute;left:0;top:0"><rect x="641.5" y="350.2" width="6" height="6" fill="#e6eef8" stroke="#d5e0ee" stroke-width="0.5"/><circle cx="655.4" cy="353.2" r="2.7" fill="#1ed83a"/><rect x="641.5" y="362.37" width="6" height="6" fill="#fff" stroke="#ddd" stroke-width="0.5"/><circle cx="655.4" cy="365.37" r="2.7" fill="#f00"/><rect x="641.5" y="374.53999999999996" width="6" height="6" fill="#fff" stroke="#ddd" stroke-width="0.5"/><circle cx="655.4" cy="377.53999999999996" r="2.7" fill="#f00"/><rect x="641.5" y="386.71" width="6" height="6" fill="#fff" stroke="#ddd" stroke-width="0.5"/><circle cx="655.4" cy="389.71" r="2.7" fill="#f00"/><rect x="641.5" y="398.88" width="6" height="6" fill="#fff" stroke="#ddd" stroke-width="0.5"/><circle cx="655.4" cy="401.88" r="2.7" fill="#f00"/><rect x="641.5" y="411.05" width="6" height="6" fill="#fff" stroke="#ddd" stroke-width="0.5"/><circle cx="655.4" cy="414.05" r="2.7" fill="#f00"/><rect x="641.5" y="423.21999999999997" width="6" height="6" fill="#fff" stroke="#ddd" stroke-width="0.5"/><circle cx="655.4" cy="426.21999999999997" r="2.7" fill="#f00"/><rect x="641.5" y="435.39" width="6" height="6" fill="#fff" stroke="#ddd" stroke-width="0.5"/><circle cx="655.4" cy="438.39" r="2.7" fill="#f00"/><rect x="641.5" y="447.56" width="6" height="6" fill="#fff" stroke="#ddd" stroke-width="0.5"/><circle cx="655.4" cy="450.56" r="2.7" fill="#f00"/><rect x="641.5" y="459.73" width="6" height="6" fill="#fff" stroke="#ddd" stroke-width="0.5"/><circle cx="655.4" cy="462.73" r="2.7" fill="#f00"/><rect x="641.5" y="471.9" width="6" height="6" fill="#2a8fe0"/><path d="M642.8 474.9 l1.3 1.3 l2.3 -2.6" stroke="#fff" stroke-width="0.7" fill="none"/><circle cx="655.4" cy="474.9" r="2.7" fill="#f00"/><rect x="634.5" y="466.8" width="119.5" height="16.8" fill="none" stroke="#e31b1b" stroke-width="1.8" rx="1"/></svg>
<div class="t" style="left:663.3px;top:350.02px;font-size:6.3px;color:#bbb;font-weight:normal;line-height:7.56px;">1</div>
<div class="t" style="left:721.5px;top:349.54px;font-size:6.6px;color:#bbb;font-weight:normal;line-height:7.92px;">97.403</div>
<div class="t" style="left:663.3px;top:362.19px;font-size:6.3px;color:#555;font-weight:normal;line-height:7.56px;">2</div>
<div class="t" style="left:721.5px;top:361.71px;font-size:6.6px;color:#555;font-weight:normal;line-height:7.92px;">0.598</div>
<div class="t" style="left:663.3px;top:374.36px;font-size:6.3px;color:#555;font-weight:normal;line-height:7.56px;">3</div>
<div class="t" style="left:721.5px;top:373.88px;font-size:6.6px;color:#555;font-weight:normal;line-height:7.92px;">0.229</div>
<div class="t" style="left:663.3px;top:386.53px;font-size:6.3px;color:#555;font-weight:normal;line-height:7.56px;">4</div>
<div class="t" style="left:721.5px;top:386.05px;font-size:6.6px;color:#555;font-weight:normal;line-height:7.92px;">0.074</div>
<div class="t" style="left:663.3px;top:398.70px;font-size:6.3px;color:#555;font-weight:normal;line-height:7.56px;">5</div>
<div class="t" style="left:721.5px;top:398.22px;font-size:6.6px;color:#555;font-weight:normal;line-height:7.92px;">0.008</div>
<div class="t" style="left:663.3px;top:410.87px;font-size:6.3px;color:#555;font-weight:normal;line-height:7.56px;">7</div>
<div class="t" style="left:721.5px;top:410.39px;font-size:6.6px;color:#555;font-weight:normal;line-height:7.92px;">0</div>
<div class="t" style="left:663.3px;top:423.04px;font-size:6.3px;color:#555;font-weight:normal;line-height:7.56px;">8</div>
<div class="t" style="left:721.5px;top:422.56px;font-size:6.6px;color:#555;font-weight:normal;line-height:7.92px;">0.008</div>
<div class="t" style="left:663.3px;top:435.21px;font-size:6.3px;color:#555;font-weight:normal;line-height:7.56px;">9</div>
<div class="t" style="left:721.5px;top:434.73px;font-size:6.6px;color:#555;font-weight:normal;line-height:7.92px;">0.008</div>
<div class="t" style="left:663.3px;top:447.38px;font-size:6.3px;color:#555;font-weight:normal;line-height:7.56px;">10</div>
<div class="t" style="left:721.5px;top:446.90px;font-size:6.6px;color:#555;font-weight:normal;line-height:7.92px;">0.016</div>
<div class="t" style="left:663.3px;top:459.55px;font-size:6.3px;color:#555;font-weight:normal;line-height:7.56px;">12</div>
<div class="t" style="left:721.5px;top:459.07px;font-size:6.6px;color:#555;font-weight:normal;line-height:7.92px;">0.008</div>
<div class="t" style="left:663.3px;top:471.72px;font-size:6.3px;color:#2a90e0;font-weight:normal;line-height:7.56px;">99</div>
<div class="t" style="left:721.5px;top:471.24px;font-size:6.6px;color:#2a90e0;font-weight:normal;line-height:7.92px;">1.647</div>
<div class="r" style="left:689.5px;top:624.8px;width:28px;height:11.2px;background:#fff;border:0.7px solid #e2e2e2;box-sizing:border-box;"></div>
<div class="t" style="left:403.5px;width:600px;text-align:center;top:627.70px;font-size:5.5px;color:#aaa;font-weight:normal;line-height:6.60px;">Clear</div>
<div class="r" style="left:721.8px;top:624.8px;width:27.5px;height:11.2px;background:#0ea1dc;"></div>
<div class="t" style="left:435.5px;width:600px;text-align:center;top:627.70px;font-size:5.5px;color:#fff;font-weight:normal;line-height:6.60px;">Apply</div>
<svg width="1268" height="650" style="position:absolute;left:0;top:0"><rect x="814.1" y="197.3" width="3.299999999999932" height="232.99" fill="#d9d9d9"/><rect x="817.30" y="197.30" width="10.25" height="10.23" fill="#d9d9d9"/><path d="M827.45 197.30 h10.15 L827.45 207.43z" fill="#00b52a"/><path d="M837.60 197.30 v10.13 h-10.15z" fill="#0d65a8"/><path d="M830.65 200.80 l1.8 1.2 M833.75 203.50 l1.2 0.8" stroke="#0a3a40" stroke-width="0.7"/><path d="M837.60 197.30 h10.15 L837.60 207.43z" fill="#00b52a"/><path d="M847.75 197.30 v10.13 h-10.15z" fill="#0d65a8"/><path d="M840.80 200.80 l1.8 1.2 M843.90 203.50 l1.2 0.8" stroke="#0a3a40" stroke-width="0.7"/><path d="M847.75 197.30 h10.15 L847.75 207.43z" fill="#00b52a"/><path d="M857.90 197.30 v10.13 h-10.15z" fill="#0d65a8"/><path d="M850.95 200.80 l1.8 1.2 M854.05 203.50 l1.2 0.8" stroke="#0a3a40" stroke-width="0.7"/><path d="M857.90 197.30 h10.15 L857.90 207.43z" fill="#00b52a"/><path d="M868.05 197.30 v10.13 h-10.15z" fill="#0d65a8"/><path d="M861.10 200.80 l1.8 1.2 M864.20 203.50 l1.2 0.8" stroke="#0a3a40" stroke-width="0.7"/><path d="M868.05 197.30 h10.15 L868.05 207.43z" fill="#00b52a"/><path d="M878.20 197.30 v10.13 h-10.15z" fill="#0d65a8"/><path d="M871.25 200.80 l1.8 1.2 M874.35 203.50 l1.2 0.8" stroke="#0a3a40" stroke-width="0.7"/><path d="M878.20 197.30 h10.15 L878.20 207.43z" fill="#00b52a"/><path d="M888.35 197.30 v10.13 h-10.15z" fill="#0d65a8"/><path d="M881.40 200.80 l1.8 1.2 M884.50 203.50 l1.2 0.8" stroke="#0a3a40" stroke-width="0.7"/><path d="M888.35 197.30 h10.15 L888.35 207.43z" fill="#00b52a"/><path d="M898.50 197.30 v10.13 h-10.15z" fill="#0d65a8"/><path d="M891.55 200.80 l1.8 1.2 M894.65 203.50 l1.2 0.8" stroke="#0a3a40" stroke-width="0.7"/><path d="M898.50 197.30 h10.15 L898.50 207.43z" fill="#00b52a"/><path d="M908.65 197.30 v10.13 h-10.15z" fill="#0d65a8"/><path d="M901.70 200.80 l1.8 1.2 M904.80 203.50 l1.2 0.8" stroke="#0a3a40" stroke-width="0.7"/><rect x="817.30" y="207.43" width="10.25" height="10.23" fill="#d9d9d9"/><rect x="827.45" y="207.43" width="10.25" height="10.23" fill="#d9d9d9"/><rect x="837.60" y="207.43" width="10.25" height="10.23" fill="#d9d9d9"/><rect x="847.75" y="207.43" width="10.25" height="10.23" fill="#d9d9d9"/><rect x="857.90" y="207.43" width="10.25" height="10.23" fill="#d9d9d9"/><rect x="868.05" y="207.43" width="10.25" height="10.23" fill="#d9d9d9"/><rect x="878.20" y="207.43" width="10.25" height="10.23" fill="#d9d9d9"/><path d="M888.35 207.43 h10.15 L888.35 217.56z" fill="#00b52a"/><path d="M898.50 207.43 v10.13 h-10.15z" fill="#0d65a8"/><path d="M891.55 210.93 l1.8 1.2 M894.65 213.63 l1.2 0.8" stroke="#0a3a40" stroke-width="0.7"/><path d="M898.50 207.43 h10.15 L898.50 217.56z" fill="#00b52a"/><path d="M908.65 207.43 v10.13 h-10.15z" fill="#0d65a8"/><path d="M901.70 210.93 l1.8 1.2 M904.80 213.63 l1.2 0.8" stroke="#0a3a40" stroke-width="0.7"/><path d="M908.65 207.43 h10.15 L908.65 217.56z" fill="#00b52a"/><path d="M918.80 207.43 v10.13 h-10.15z" fill="#0d65a8"/><path d="M911.85 210.93 l1.8 1.2 M914.95 213.63 l1.2 0.8" stroke="#0a3a40" stroke-width="0.7"/><path d="M918.80 207.43 h10.15 L918.80 217.56z" fill="#00b52a"/><path d="M928.95 207.43 v10.13 h-10.15z" fill="#0d65a8"/><path d="M922.00 210.93 l1.8 1.2 M925.10 213.63 l1.2 0.8" stroke="#0a3a40" stroke-width="0.7"/><rect x="817.30" y="217.56" width="10.25" height="10.23" fill="#d9d9d9"/><rect x="827.45" y="217.56" width="10.25" height="10.23" fill="#d9d9d9"/><rect x="837.60" y="217.56" width="10.25" height="10.23" fill="#d9d9d9"/><rect x="847.75" y="217.56" width="10.25" height="10.23" fill="#d9d9d9"/><rect x="857.90" y="217.56" width="10.25" height="10.23" fill="#d9d9d9"/><rect x="868.05" y="217.56" width="10.25" height="10.23" fill="#d9d9d9"/><rect x="878.20" y="217.56" width="10.25" height="10.23" fill="#d9d9d9"/><rect x="888.35" y="217.56" width="10.25" height="10.23" fill="#d9d9d9"/><rect x="898.50" y="217.56" width="10.25" height="10.23" fill="#d9d9d9"/><rect x="908.65" y="217.56" width="10.25" height="10.23" fill="#d9d9d9"/><path d="M918.80 217.56 h10.15 L918.80 227.69z" fill="#00b52a"/><path d="M928.95 217.56 v10.13 h-10.15z" fill="#0d65a8"/><path d="M922.00 221.06 l1.8 1.2 M925.10 223.76 l1.2 0.8" stroke="#0a3a40" stroke-width="0.7"/><path d="M928.95 217.56 h10.15 L928.95 227.69z" fill="#00b52a"/><path d="M939.10 217.56 v10.13 h-10.15z" fill="#0d65a8"/><path d="M932.15 221.06 l1.8 1.2 M935.25 223.76 l1.2 0.8" stroke="#0a3a40" stroke-width="0.7"/><path d="M939.10 217.56 h10.15 L939.10 227.69z" fill="#00b52a"/><path d="M949.25 217.56 v10.13 h-10.15z" fill="#0d65a8"/><path d="M942.30 221.06 l1.8 1.2 M945.40 223.76 l1.2 0.8" stroke="#0a3a40" stroke-width="0.7"/><path d="M949.25 217.56 h10.15 L949.25 227.69z" fill="#00b52a"/><path d="M959.40 217.56 v10.13 h-10.15z" fill="#0d65a8"/><path d="M952.45 221.06 l1.8 1.2 M955.55 223.76 l1.2 0.8" stroke="#0a3a40" stroke-width="0.7"/><rect x="817.30" y="227.69" width="10.25" height="10.23" fill="#d9d9d9"/><rect x="827.45" y="227.69" width="10.25" height="10.23" fill="#d9d9d9"/><rect x="837.60" y="227.69" width="10.25" height="10.23" fill="#d9d9d9"/><rect x="847.75" y="227.69" width="10.25" height="10.23" fill="#d9d9d9"/><rect x="857.90" y="227.69" width="10.25" height="10.23" fill="#d9d9d9"/><rect x="868.05" y="227.69" width="10.25" height="10.23" fill="#d9d9d9"/><rect x="878.20" y="227.69" width="10.25" height="10.23" fill="#d9d9d9"/><rect x="888.35" y="227.69" width="10.25" height="10.23" fill="#d9d9d9"/><rect x="898.50" y="227.69" width="10.25" height="10.23" fill="#d9d9d9"/><rect x="908.65" y="227.69" width="10.25" height="10.23" fill="#d9d9d9"/><rect x="918.80" y="227.69" width="10.25" height="10.23" fill="#d9d9d9"/><rect x="928.95" y="227.69" width="10.25" height="10.23" fill="#d9d9d9"/><path d="M939.10 227.69 h10.15 L939.10 237.82z" fill="#00b52a"/><path d="M949.25 227.69 v10.13 h-10.15z" fill="#0d65a8"/><path d="M942.30 231.19 l1.8 1.2 M945.40 233.89 l1.2 0.8" stroke="#0a3a40" stroke-width="0.7"/><path d="M949.25 227.69 h10.15 L949.25 237.82z" fill="#00b52a"/><path d="M959.40 227.69 v10.13 h-10.15z" fill="#0d65a8"/><path d="M952.45 231.19 l1.8 1.2 M955.55 233.89 l1.2 0.8" stroke="#0a3a40" stroke-width="0.7"/><path d="M959.40 227.69 h10.15 L959.40 237.82z" fill="#00b52a"/><path d="M969.55 227.69 v10.13 h-10.15z" fill="#0d65a8"/><path d="M962.60 231.19 l1.8 1.2 M965.70 233.89 l1.2 0.8" stroke="#0a3a40" stroke-width="0.7"/><rect x="817.30" y="237.82" width="10.25" height="10.23" fill="#d9d9d9"/><rect x="827.45" y="237.82" width="10.25" height="10.23" fill="#d9d9d9"/><rect x="837.60" y="237.82" width="10.25" height="10.23" fill="#d9d9d9"/><rect x="847.75" y="237.82" width="10.25" height="10.23" fill="#d9d9d9"/><rect x="857.90" y="237.82" width="10.25" height="10.23" fill="#d9d9d9"/><rect x="868.05" y="237.82" width="10.25" height="10.23" fill="#d9d9d9"/><rect x="878.20" y="237.82" width="10.25" height="10.23" fill="#d9d9d9"/><rect x="888.35" y="237.82" width="10.25" height="10.23" fill="#d9d9d9"/><rect x="898.50" y="237.82" width="10.25" height="10.23" fill="#d9d9d9"/><rect x="908.65" y="237.82" width="10.25" height="10.23" fill="#d9d9d9"/><rect x="918.80" y="237.82" width="10.25" height="10.23" fill="#d9d9d9"/><rect x="928.95" y="237.82" width="10.25" height="10.23" fill="#d9d9d9"/><rect x="939.10" y="237.82" width="10.25" height="10.23" fill="#d9d9d9"/><rect x="949.25" y="237.82" width="10.25" height="10.23" fill="#d9d9d9"/><path d="M959.40 237.82 h10.15 L959.40 247.95z" fill="#00b52a"/><path d="M969.55 237.82 v10.13 h-10.15z" fill="#0d65a8"/><path d="M962.60 241.32 l1.8 1.2 M965.70 244.02 l1.2 0.8" stroke="#0a3a40" stroke-width="0.7"/><path d="M969.55 237.82 h10.15 L969.55 247.95z" fill="#00b52a"/><path d="M979.70 237.82 v10.13 h-10.15z" fill="#0d65a8"/><path d="M972.75 241.32 l1.8 1.2 M975.85 244.02 l1.2 0.8" stroke="#0a3a40" stroke-width="0.7"/><path d="M979.70 237.82 h10.15 L979.70 247.95z" fill="#00b52a"/><path d="M989.85 237.82 v10.13 h-10.15z" fill="#0d65a8"/><path d="M982.90 241.32 l1.8 1.2 M986.00 244.02 l1.2 0.8" stroke="#0a3a40" stroke-width="0.7"/><rect x="817.30" y="247.95" width="10.25" height="10.23" fill="#d9d9d9"/><rect x="827.45" y="247.95" width="10.25" height="10.23" fill="#d9d9d9"/><rect x="837.60" y="247.95" width="10.25" height="10.23" fill="#d9d9d9"/><rect x="847.75" y="247.95" width="10.25" height="10.23" fill="#d9d9d9"/><rect x="857.90" y="247.95" width="10.25" height="10.23" fill="#d9d9d9"/><rect x="868.05" y="247.95" width="10.25" height="10.23" fill="#d9d9d9"/><rect x="878.20" y="247.95" width="10.25" height="10.23" fill="#d9d9d9"/><rect x="888.35" y="247.95" width="10.25" height="10.23" fill="#d9d9d9"/><rect x="898.50" y="247.95" width="10.25" height="10.23" fill="#d9d9d9"/><rect x="908.65" y="247.95" width="10.25" height="10.23" fill="#d9d9d9"/><rect x="918.80" y="247.95" width="10.25" height="10.23" fill="#d9d9d9"/><rect x="928.95" y="247.95" width="10.25" height="10.23" fill="#d9d9d9"/><rect x="939.10" y="247.95" width="10.25" height="10.23" fill="#d9d9d9"/><rect x="949.25" y="247.95" width="10.25" height="10.23" fill="#d9d9d9"/><rect x="959.40" y="247.95" width="10.25" height="10.23" fill="#d9d9d9"/><rect x="969.55" y="247.95" width="10.25" height="10.23" fill="#d9d9d9"/><path d="M979.70 247.95 h10.15 L979.70 258.08z" fill="#00b52a"/><path d="M989.85 247.95 v10.13 h-10.15z" fill="#0d65a8"/><path d="M982.90 251.45 l1.8 1.2 M986.00 254.15 l1.2 0.8" stroke="#0a3a40" stroke-width="0.7"/><path d="M989.85 247.95 h10.15 L989.85 258.08z" fill="#00b52a"/><path d="M1000.00 247.95 v10.13 h-10.15z" fill="#0d65a8"/><path d="M993.05 251.45 l1.8 1.2 M996.15 254.15 l1.2 0.8" stroke="#0a3a40" stroke-width="0.7"/><rect x="817.30" y="258.08" width="10.25" height="10.23" fill="#d9d9d9"/><rect x="827.45" y="258.08" width="10.25" height="10.23" fill="#d9d9d9"/><rect x="837.60" y="258.08" width="10.25" height="10.23" fill="#d9d9d9"/><rect x="847.75" y="258.08" width="10.25" height="10.23" fill="#d9d9d9"/><rect x="857.90" y="258.08" width="10.25" height="10.23" fill="#d9d9d9"/><rect x="868.05" y="258.08" width="10.25" height="10.23" fill="#d9d9d9"/><rect x="878.20" y="258.08" width="10.25" height="10.23" fill="#d9d9d9"/><rect x="888.35" y="258.08" width="10.25" height="10.23" fill="#d9d9d9"/><rect x="898.50" y="258.08" width="10.25" height="10.23" fill="#d9d9d9"/><rect x="908.65" y="258.08" width="10.25" height="10.23" fill="#d9d9d9"/><rect x="918.80" y="258.08" width="10.25" height="10.23" fill="#d9d9d9"/><rect x="928.95" y="258.08" width="10.25" height="10.23" fill="#d9d9d9"/><rect x="939.10" y="258.08" width="10.25" height="10.23" fill="#d9d9d9"/><rect x="949.25" y="258.08" width="10.25" height="10.23" fill="#d9d9d9"/><rect x="959.40" y="258.08" width="10.25" height="10.23" fill="#d9d9d9"/><rect x="969.55" y="258.08" width="10.25" height="10.23" fill="#d9d9d9"/><rect x="979.70" y="258.08" width="10.25" height="10.23" fill="#d9d9d9"/><path d="M989.85 258.08 h10.15 L989.85 268.21z" fill="#00b52a"/><path d="M1000.00 258.08 v10.13 h-10.15z" fill="#0d65a8"/><path d="M993.05 261.58 l1.8 1.2 M996.15 264.28 l1.2 0.8" stroke="#0a3a40" stroke-width="0.7"/><path d="M1000.00 258.08 h10.15 L1000.00 268.21z" fill="#00b52a"/><path d="M1010.15 258.08 v10.13 h-10.15z" fill="#0d65a8"/><path d="M1003.20 261.58 l1.8 1.2 M1006.30 264.28 l1.2 0.8" stroke="#0a3a40" stroke-width="0.7"/><rect x="1010.15" y="258.08" width="10.25" height="10.23" fill="#d9d9d9"/><rect x="817.30" y="268.21" width="10.25" height="10.23" fill="#d9d9d9"/><rect x="827.45" y="268.21" width="10.25" height="10.23" fill="#d9d9d9"/><rect x="837.60" y="268.21" width="10.25" height="10.23" fill="#d9d9d9"/><rect x="847.75" y="268.21" width="10.25" height="10.23" fill="#d9d9d9"/><rect x="857.90" y="268.21" width="10.25" height="10.23" fill="#d9d9d9"/><rect x="868.05" y="268.21" width="10.25" height="10.23" fill="#d9d9d9"/><rect x="878.20" y="268.21" width="10.25" height="10.23" fill="#d9d9d9"/><rect x="888.35" y="268.21" width="10.25" height="10.23" fill="#d9d9d9"/><rect x="898.50" y="268.21" width="10.25" height="10.23" fill="#d9d9d9"/><rect x="908.65" y="268.21" width="10.25" height="10.23" fill="#d9d9d9"/><rect x="918.80" y="268.21" width="10.25" height="10.23" fill="#d9d9d9"/><rect x="928.95" y="268.21" width="10.25" height="10.23" fill="#d9d9d9"/><rect x="939.10" y="268.21" width="10.25" height="10.23" fill="#d9d9d9"/><rect x="949.25" y="268.21" width="10.25" height="10.23" fill="#d9d9d9"/><rect x="959.40" y="268.21" width="10.25" height="10.23" fill="#d9d9d9"/><rect x="969.55" y="268.21" width="10.25" height="10.23" fill="#d9d9d9"/><rect x="979.70" y="268.21" width="10.25" height="10.23" fill="#d9d9d9"/><rect x="989.85" y="268.21" width="10.25" height="10.23" fill="#d9d9d9"/><rect x="1000.00" y="268.21" width="10.25" height="10.23" fill="#d9d9d9"/><rect x="1010.15" y="268.21" width="10.25" height="10.23" fill="#d9d9d9"/><rect x="1020.30" y="268.21" width="10.25" height="10.23" fill="#d9d9d9"/><rect x="817.30" y="278.34" width="10.25" height="10.23" fill="#d9d9d9"/><rect x="827.45" y="278.34" width="10.25" height="10.23" fill="#d9d9d9"/><rect x="837.60" y="278.34" width="10.25" height="10.23" fill="#d9d9d9"/><rect x="847.75" y="278.34" width="10.25" height="10.23" fill="#d9d9d9"/><rect x="857.90" y="278.34" width="10.25" height="10.23" fill="#d9d9d9"/><rect x="868.05" y="278.34" width="10.25" height="10.23" fill="#d9d9d9"/><rect x="878.20" y="278.34" width="10.25" height="10.23" fill="#d9d9d9"/><rect x="888.35" y="278.34" width="10.25" height="10.23" fill="#d9d9d9"/><rect x="898.50" y="278.34" width="10.25" height="10.23" fill="#d9d9d9"/><rect x="908.65" y="278.34" width="10.25" height="10.23" fill="#d9d9d9"/><rect x="918.80" y="278.34" width="10.25" height="10.23" fill="#d9d9d9"/><rect x="928.95" y="278.34" width="10.25" height="10.23" fill="#d9d9d9"/><rect x="939.10" y="278.34" width="10.25" height="10.23" fill="#d9d9d9"/><rect x="949.25" y="278.34" width="10.25" height="10.23" fill="#d9d9d9"/><rect x="959.40" y="278.34" width="10.25" height="10.23" fill="#d9d9d9"/><rect x="969.55" y="278.34" width="10.25" height="10.23" fill="#d9d9d9"/><rect x="979.70" y="278.34" width="10.25" height="10.23" fill="#d9d9d9"/><rect x="989.85" y="278.34" width="10.25" height="10.23" fill="#d9d9d9"/><rect x="1000.00" y="278.34" width="10.25" height="10.23" fill="#d9d9d9"/><rect x="1010.15" y="278.34" width="10.25" height="10.23" fill="#d9d9d9"/><rect x="1020.30" y="278.34" width="10.25" height="10.23" fill="#d9d9d9"/><rect x="817.30" y="288.47" width="10.25" height="10.23" fill="#d9d9d9"/><rect x="827.45" y="288.47" width="10.25" height="10.23" fill="#d9d9d9"/><rect x="837.60" y="288.47" width="10.25" height="10.23" fill="#d9d9d9"/><rect x="847.75" y="288.47" width="10.25" height="10.23" fill="#d9d9d9"/><rect x="857.90" y="288.47" width="10.25" height="10.23" fill="#d9d9d9"/><rect x="868.05" y="288.47" width="10.25" height="10.23" fill="#d9d9d9"/><rect x="878.20" y="288.47" width="10.25" height="10.23" fill="#d9d9d9"/><rect x="888.35" y="288.47" width="10.25" height="10.23" fill="#d9d9d9"/><rect x="898.50" y="288.47" width="10.25" height="10.23" fill="#d9d9d9"/><rect x="908.65" y="288.47" width="10.25" height="10.23" fill="#d9d9d9"/><rect x="918.80" y="288.47" width="10.25" height="10.23" fill="#d9d9d9"/><rect x="928.95" y="288.47" width="10.25" height="10.23" fill="#d9d9d9"/><rect x="939.10" y="288.47" width="10.25" height="10.23" fill="#d9d9d9"/><rect x="949.25" y="288.47" width="10.25" height="10.23" fill="#d9d9d9"/><rect x="959.40" y="288.47" width="10.25" height="10.23" fill="#d9d9d9"/><rect x="969.55" y="288.47" width="10.25" height="10.23" fill="#d9d9d9"/><rect x="979.70" y="288.47" width="10.25" height="10.23" fill="#d9d9d9"/><rect x="989.85" y="288.47" width="10.25" height="10.23" fill="#d9d9d9"/><rect x="1000.00" y="288.47" width="10.25" height="10.23" fill="#d9d9d9"/><rect x="1010.15" y="288.47" width="10.25" height="10.23" fill="#d9d9d9"/><rect x="817.30" y="298.60" width="10.25" height="10.23" fill="#d9d9d9"/><rect x="827.45" y="298.60" width="10.25" height="10.23" fill="#d9d9d9"/><rect x="837.60" y="298.60" width="10.25" height="10.23" fill="#d9d9d9"/><rect x="847.75" y="298.60" width="10.25" height="10.23" fill="#d9d9d9"/><rect x="857.90" y="298.60" width="10.25" height="10.23" fill="#d9d9d9"/><rect x="868.05" y="298.60" width="10.25" height="10.23" fill="#d9d9d9"/><rect x="878.20" y="298.60" width="10.25" height="10.23" fill="#d9d9d9"/><rect x="888.35" y="298.60" width="10.25" height="10.23" fill="#d9d9d9"/><rect x="898.50" y="298.60" width="10.25" height="10.23" fill="#d9d9d9"/><rect x="908.65" y="298.60" width="10.25" height="10.23" fill="#d9d9d9"/><rect x="918.80" y="298.60" width="10.25" height="10.23" fill="#d9d9d9"/><rect x="928.95" y="298.60" width="10.25" height="10.23" fill="#d9d9d9"/><rect x="939.10" y="298.60" width="10.25" height="10.23" fill="#d9d9d9"/><rect x="949.25" y="298.60" width="10.25" height="10.23" fill="#d9d9d9"/><rect x="959.40" y="298.60" width="10.25" height="10.23" fill="#d9d9d9"/><rect x="969.55" y="298.60" width="10.25" height="10.23" fill="#d9d9d9"/><rect x="979.70" y="298.60" width="10.25" height="10.23" fill="#d9d9d9"/><rect x="989.85" y="298.60" width="10.25" height="10.23" fill="#d9d9d9"/><rect x="1000.00" y="298.60" width="10.25" height="10.23" fill="#d9d9d9"/><rect x="817.30" y="308.73" width="10.25" height="10.23" fill="#d9d9d9"/><rect x="827.45" y="308.73" width="10.25" height="10.23" fill="#d9d9d9"/><rect x="837.60" y="308.73" width="10.25" height="10.23" fill="#d9d9d9"/><rect x="847.75" y="308.73" width="10.25" height="10.23" fill="#d9d9d9"/><rect x="857.90" y="308.73" width="10.25" height="10.23" fill="#d9d9d9"/><rect x="868.05" y="308.73" width="10.25" height="10.23" fill="#d9d9d9"/><rect x="878.20" y="308.73" width="10.25" height="10.23" fill="#d9d9d9"/><rect x="888.35" y="308.73" width="10.25" height="10.23" fill="#d9d9d9"/><rect x="898.50" y="308.73" width="10.25" height="10.23" fill="#d9d9d9"/><rect x="908.65" y="308.73" width="10.25" height="10.23" fill="#d9d9d9"/><rect x="918.80" y="308.73" width="10.25" height="10.23" fill="#d9d9d9"/><rect x="928.95" y="308.73" width="10.25" height="10.23" fill="#d9d9d9"/><rect x="939.10" y="308.73" width="10.25" height="10.23" fill="#d9d9d9"/><rect x="949.25" y="308.73" width="10.25" height="10.23" fill="#d9d9d9"/><rect x="959.40" y="308.73" width="10.25" height="10.23" fill="#d9d9d9"/><rect x="969.55" y="308.73" width="10.25" height="10.23" fill="#d9d9d9"/><rect x="979.70" y="308.73" width="10.25" height="10.23" fill="#d9d9d9"/><rect x="989.85" y="308.73" width="10.25" height="10.23" fill="#d9d9d9"/><rect x="1000.00" y="308.73" width="10.25" height="10.23" fill="#d9d9d9"/><rect x="1010.15" y="308.73" width="10.25" height="10.23" fill="#d9d9d9"/><rect x="1020.30" y="308.73" width="10.25" height="10.23" fill="#d9d9d9"/><rect x="817.30" y="318.86" width="10.25" height="10.23" fill="#d9d9d9"/><rect x="827.45" y="318.86" width="10.25" height="10.23" fill="#d9d9d9"/><rect x="837.60" y="318.86" width="10.25" height="10.23" fill="#d9d9d9"/><rect x="847.75" y="318.86" width="10.25" height="10.23" fill="#d9d9d9"/><rect x="857.90" y="318.86" width="10.25" height="10.23" fill="#d9d9d9"/><rect x="868.05" y="318.86" width="10.25" height="10.23" fill="#d9d9d9"/><rect x="878.20" y="318.86" width="10.25" height="10.23" fill="#d9d9d9"/><rect x="888.35" y="318.86" width="10.25" height="10.23" fill="#d9d9d9"/><rect x="898.50" y="318.86" width="10.25" height="10.23" fill="#d9d9d9"/><rect x="908.65" y="318.86" width="10.25" height="10.23" fill="#d9d9d9"/><rect x="918.80" y="318.86" width="10.25" height="10.23" fill="#d9d9d9"/><rect x="928.95" y="318.86" width="10.25" height="10.23" fill="#d9d9d9"/><rect x="939.10" y="318.86" width="10.25" height="10.23" fill="#d9d9d9"/><rect x="949.25" y="318.86" width="10.25" height="10.23" fill="#d9d9d9"/><rect x="959.40" y="318.86" width="10.25" height="10.23" fill="#d9d9d9"/><rect x="969.55" y="318.86" width="10.25" height="10.23" fill="#d9d9d9"/><rect x="979.70" y="318.86" width="10.25" height="10.23" fill="#d9d9d9"/><rect x="989.85" y="318.86" width="10.25" height="10.23" fill="#d9d9d9"/><rect x="1000.00" y="318.86" width="10.25" height="10.23" fill="#d9d9d9"/><rect x="1010.15" y="318.86" width="10.25" height="10.23" fill="#d9d9d9"/><rect x="1020.30" y="318.86" width="10.25" height="10.23" fill="#d9d9d9"/><rect x="1030.45" y="318.86" width="10.25" height="10.23" fill="#d9d9d9"/><rect x="1040.60" y="318.86" width="10.25" height="10.23" fill="#d9d9d9"/><rect x="1050.75" y="318.86" width="10.25" height="10.23" fill="#d9d9d9"/><rect x="1060.90" y="318.86" width="10.25" height="10.23" fill="#d9d9d9"/><rect x="817.30" y="328.99" width="10.25" height="10.23" fill="#d9d9d9"/><rect x="827.45" y="328.99" width="10.25" height="10.23" fill="#d9d9d9"/><rect x="837.60" y="328.99" width="10.25" height="10.23" fill="#d9d9d9"/><rect x="847.75" y="328.99" width="10.25" height="10.23" fill="#d9d9d9"/><rect x="857.90" y="328.99" width="10.25" height="10.23" fill="#d9d9d9"/><rect x="868.05" y="328.99" width="10.25" height="10.23" fill="#d9d9d9"/><rect x="878.20" y="328.99" width="10.25" height="10.23" fill="#d9d9d9"/><rect x="888.35" y="328.99" width="10.25" height="10.23" fill="#d9d9d9"/><rect x="898.50" y="328.99" width="10.25" height="10.23" fill="#d9d9d9"/><rect x="908.65" y="328.99" width="10.25" height="10.23" fill="#d9d9d9"/><rect x="918.80" y="328.99" width="10.25" height="10.23" fill="#d9d9d9"/><rect x="928.95" y="328.99" width="10.25" height="10.23" fill="#d9d9d9"/><rect x="939.10" y="328.99" width="10.25" height="10.23" fill="#d9d9d9"/><rect x="949.25" y="328.99" width="10.25" height="10.23" fill="#d9d9d9"/><rect x="959.40" y="328.99" width="10.25" height="10.23" fill="#d9d9d9"/><rect x="969.55" y="328.99" width="10.25" height="10.23" fill="#d9d9d9"/><rect x="979.70" y="328.99" width="10.25" height="10.23" fill="#d9d9d9"/><rect x="989.85" y="328.99" width="10.25" height="10.23" fill="#d9d9d9"/><rect x="1000.00" y="328.99" width="10.25" height="10.23" fill="#d9d9d9"/><rect x="1010.15" y="328.99" width="10.25" height="10.23" fill="#d9d9d9"/><rect x="1020.30" y="328.99" width="10.25" height="10.23" fill="#d9d9d9"/><rect x="1030.45" y="328.99" width="10.25" height="10.23" fill="#d9d9d9"/><rect x="1040.60" y="328.99" width="10.25" height="10.23" fill="#d9d9d9"/><rect x="1050.75" y="328.99" width="10.25" height="10.23" fill="#d9d9d9"/><rect x="1060.90" y="328.99" width="10.25" height="10.23" fill="#d9d9d9"/><path d="M1071.05 328.99 h10.15 L1071.05 339.12z" fill="#00b52a"/><path d="M1081.20 328.99 v10.13 h-10.15z" fill="#0d65a8"/><path d="M1074.25 332.49 l1.8 1.2 M1077.35 335.19 l1.2 0.8" stroke="#0a3a40" stroke-width="0.7"/><rect x="817.30" y="339.12" width="10.25" height="10.23" fill="#d9d9d9"/><rect x="827.45" y="339.12" width="10.25" height="10.23" fill="#d9d9d9"/><rect x="837.60" y="339.12" width="10.25" height="10.23" fill="#d9d9d9"/><rect x="847.75" y="339.12" width="10.25" height="10.23" fill="#d9d9d9"/><rect x="857.90" y="339.12" width="10.25" height="10.23" fill="#d9d9d9"/><rect x="868.05" y="339.12" width="10.25" height="10.23" fill="#d9d9d9"/><rect x="878.20" y="339.12" width="10.25" height="10.23" fill="#d9d9d9"/><rect x="888.35" y="339.12" width="10.25" height="10.23" fill="#d9d9d9"/><rect x="898.50" y="339.12" width="10.25" height="10.23" fill="#d9d9d9"/><rect x="908.65" y="339.12" width="10.25" height="10.23" fill="#d9d9d9"/><rect x="918.80" y="339.12" width="10.25" height="10.23" fill="#d9d9d9"/><rect x="928.95" y="339.12" width="10.25" height="10.23" fill="#d9d9d9"/><rect x="939.10" y="339.12" width="10.25" height="10.23" fill="#d9d9d9"/><rect x="949.25" y="339.12" width="10.25" height="10.23" fill="#d9d9d9"/><rect x="959.40" y="339.12" width="10.25" height="10.23" fill="#d9d9d9"/><rect x="969.55" y="339.12" width="10.25" height="10.23" fill="#d9d9d9"/><rect x="979.70" y="339.12" width="10.25" height="10.23" fill="#d9d9d9"/><rect x="989.85" y="339.12" width="10.25" height="10.23" fill="#d9d9d9"/><rect x="1000.00" y="339.12" width="10.25" height="10.23" fill="#d9d9d9"/><rect x="1010.15" y="339.12" width="10.25" height="10.23" fill="#d9d9d9"/><rect x="1020.30" y="339.12" width="10.25" height="10.23" fill="#d9d9d9"/><rect x="1030.45" y="339.12" width="10.25" height="10.23" fill="#d9d9d9"/><rect x="1040.60" y="339.12" width="10.25" height="10.23" fill="#d9d9d9"/><rect x="1050.75" y="339.12" width="10.25" height="10.23" fill="#d9d9d9"/><rect x="1060.90" y="339.12" width="10.25" height="10.23" fill="#d9d9d9"/><path d="M1071.05 339.12 h10.15 L1071.05 349.25z" fill="#00b52a"/><path d="M1081.20 339.12 v10.13 h-10.15z" fill="#0d65a8"/><path d="M1074.25 342.62 l1.8 1.2 M1077.35 345.32 l1.2 0.8" stroke="#0a3a40" stroke-width="0.7"/><rect x="817.30" y="349.25" width="10.25" height="10.23" fill="#d9d9d9"/><rect x="827.45" y="349.25" width="10.25" height="10.23" fill="#d9d9d9"/><rect x="837.60" y="349.25" width="10.25" height="10.23" fill="#d9d9d9"/><rect x="847.75" y="349.25" width="10.25" height="10.23" fill="#d9d9d9"/><rect x="857.90" y="349.25" width="10.25" height="10.23" fill="#d9d9d9"/><rect x="868.05" y="349.25" width="10.25" height="10.23" fill="#d9d9d9"/><rect x="878.20" y="349.25" width="10.25" height="10.23" fill="#d9d9d9"/><rect x="888.35" y="349.25" width="10.25" height="10.23" fill="#d9d9d9"/><rect x="898.50" y="349.25" width="10.25" height="10.23" fill="#d9d9d9"/><rect x="908.65" y="349.25" width="10.25" height="10.23" fill="#d9d9d9"/><rect x="918.80" y="349.25" width="10.25" height="10.23" fill="#d9d9d9"/><rect x="928.95" y="349.25" width="10.25" height="10.23" fill="#d9d9d9"/><rect x="939.10" y="349.25" width="10.25" height="10.23" fill="#d9d9d9"/><rect x="949.25" y="349.25" width="10.25" height="10.23" fill="#d9d9d9"/><rect x="959.40" y="349.25" width="10.25" height="10.23" fill="#d9d9d9"/><rect x="969.55" y="349.25" width="10.25" height="10.23" fill="#d9d9d9"/><rect x="979.70" y="349.25" width="10.25" height="10.23" fill="#d9d9d9"/><rect x="989.85" y="349.25" width="10.25" height="10.23" fill="#d9d9d9"/><rect x="1000.00" y="349.25" width="10.25" height="10.23" fill="#d9d9d9"/><rect x="1010.15" y="349.25" width="10.25" height="10.23" fill="#d9d9d9"/><rect x="1020.30" y="349.25" width="10.25" height="10.23" fill="#d9d9d9"/><rect x="1030.45" y="349.25" width="10.25" height="10.23" fill="#d9d9d9"/><rect x="1040.60" y="349.25" width="10.25" height="10.23" fill="#d9d9d9"/><rect x="1050.75" y="349.25" width="10.25" height="10.23" fill="#d9d9d9"/><rect x="1060.90" y="349.25" width="10.25" height="10.23" fill="#d9d9d9"/><rect x="1071.05" y="349.25" width="10.25" height="10.23" fill="#d9d9d9"/><path d="M1081.20 349.25 h10.15 L1081.20 359.38z" fill="#00b52a"/><path d="M1091.35 349.25 v10.13 h-10.15z" fill="#0d65a8"/><path d="M1084.40 352.75 l1.8 1.2 M1087.50 355.45 l1.2 0.8" stroke="#0a3a40" stroke-width="0.7"/><rect x="817.30" y="359.38" width="10.25" height="10.23" fill="#d9d9d9"/><rect x="827.45" y="359.38" width="10.25" height="10.23" fill="#d9d9d9"/><rect x="837.60" y="359.38" width="10.25" height="10.23" fill="#d9d9d9"/><rect x="847.75" y="359.38" width="10.25" height="10.23" fill="#d9d9d9"/><rect x="857.90" y="359.38" width="10.25" height="10.23" fill="#d9d9d9"/><rect x="868.05" y="359.38" width="10.25" height="10.23" fill="#d9d9d9"/><rect x="878.20" y="359.38" width="10.25" height="10.23" fill="#d9d9d9"/><rect x="888.35" y="359.38" width="10.25" height="10.23" fill="#d9d9d9"/><rect x="898.50" y="359.38" width="10.25" height="10.23" fill="#d9d9d9"/><rect x="908.65" y="359.38" width="10.25" height="10.23" fill="#d9d9d9"/><rect x="918.80" y="359.38" width="10.25" height="10.23" fill="#d9d9d9"/><rect x="928.95" y="359.38" width="10.25" height="10.23" fill="#d9d9d9"/><rect x="939.10" y="359.38" width="10.25" height="10.23" fill="#d9d9d9"/><rect x="949.25" y="359.38" width="10.25" height="10.23" fill="#d9d9d9"/><rect x="959.40" y="359.38" width="10.25" height="10.23" fill="#d9d9d9"/><rect x="969.55" y="359.38" width="10.25" height="10.23" fill="#d9d9d9"/><rect x="979.70" y="359.38" width="10.25" height="10.23" fill="#d9d9d9"/><rect x="989.85" y="359.38" width="10.25" height="10.23" fill="#d9d9d9"/><rect x="1000.00" y="359.38" width="10.25" height="10.23" fill="#d9d9d9"/><rect x="1010.15" y="359.38" width="10.25" height="10.23" fill="#d9d9d9"/><rect x="1020.30" y="359.38" width="10.25" height="10.23" fill="#d9d9d9"/><rect x="1030.45" y="359.38" width="10.25" height="10.23" fill="#d9d9d9"/><rect x="1040.60" y="359.38" width="10.25" height="10.23" fill="#d9d9d9"/><rect x="1050.75" y="359.38" width="10.25" height="10.23" fill="#d9d9d9"/><rect x="1060.90" y="359.38" width="10.25" height="10.23" fill="#d9d9d9"/><rect x="1071.05" y="359.38" width="10.25" height="10.23" fill="#d9d9d9"/><path d="M1081.20 359.38 h10.15 L1081.20 369.51z" fill="#00b52a"/><path d="M1091.35 359.38 v10.13 h-10.15z" fill="#0d65a8"/><path d="M1084.40 362.88 l1.8 1.2 M1087.50 365.58 l1.2 0.8" stroke="#0a3a40" stroke-width="0.7"/><rect x="817.30" y="369.51" width="10.25" height="10.23" fill="#d9d9d9"/><rect x="827.45" y="369.51" width="10.25" height="10.23" fill="#d9d9d9"/><rect x="837.60" y="369.51" width="10.25" height="10.23" fill="#d9d9d9"/><rect x="847.75" y="369.51" width="10.25" height="10.23" fill="#d9d9d9"/><rect x="857.90" y="369.51" width="10.25" height="10.23" fill="#d9d9d9"/><rect x="868.05" y="369.51" width="10.25" height="10.23" fill="#d9d9d9"/><rect x="878.20" y="369.51" width="10.25" height="10.23" fill="#d9d9d9"/><rect x="888.35" y="369.51" width="10.25" height="10.23" fill="#d9d9d9"/><rect x="898.50" y="369.51" width="10.25" height="10.23" fill="#d9d9d9"/><rect x="908.65" y="369.51" width="10.25" height="10.23" fill="#d9d9d9"/><rect x="918.80" y="369.51" width="10.25" height="10.23" fill="#d9d9d9"/><rect x="928.95" y="369.51" width="10.25" height="10.23" fill="#d9d9d9"/><rect x="939.10" y="369.51" width="10.25" height="10.23" fill="#d9d9d9"/><rect x="949.25" y="369.51" width="10.25" height="10.23" fill="#d9d9d9"/><rect x="959.40" y="369.51" width="10.25" height="10.23" fill="#d9d9d9"/><rect x="969.55" y="369.51" width="10.25" height="10.23" fill="#d9d9d9"/><rect x="979.70" y="369.51" width="10.25" height="10.23" fill="#d9d9d9"/><rect x="989.85" y="369.51" width="10.25" height="10.23" fill="#d9d9d9"/><rect x="1000.00" y="369.51" width="10.25" height="10.23" fill="#d9d9d9"/><rect x="1010.15" y="369.51" width="10.25" height="10.23" fill="#d9d9d9"/><rect x="1020.30" y="369.51" width="10.25" height="10.23" fill="#d9d9d9"/><rect x="1030.45" y="369.51" width="10.25" height="10.23" fill="#d9d9d9"/><rect x="1040.60" y="369.51" width="10.25" height="10.23" fill="#d9d9d9"/><rect x="1050.75" y="369.51" width="10.25" height="10.23" fill="#d9d9d9"/><rect x="1060.90" y="369.51" width="10.25" height="10.23" fill="#d9d9d9"/><rect x="1071.05" y="369.51" width="10.25" height="10.23" fill="#d9d9d9"/><rect x="1081.20" y="369.51" width="10.25" height="10.23" fill="#d9d9d9"/><path d="M1091.35 369.51 h10.15 L1091.35 379.64z" fill="#00b52a"/><path d="M1101.50 369.51 v10.13 h-10.15z" fill="#0d65a8"/><path d="M1094.55 373.01 l1.8 1.2 M1097.65 375.71 l1.2 0.8" stroke="#0a3a40" stroke-width="0.7"/><rect x="817.30" y="379.64" width="10.25" height="10.23" fill="#d9d9d9"/><rect x="827.45" y="379.64" width="10.25" height="10.23" fill="#d9d9d9"/><rect x="837.60" y="379.64" width="10.25" height="10.23" fill="#d9d9d9"/><rect x="847.75" y="379.64" width="10.25" height="10.23" fill="#d9d9d9"/><rect x="857.90" y="379.64" width="10.25" height="10.23" fill="#d9d9d9"/><rect x="868.05" y="379.64" width="10.25" height="10.23" fill="#d9d9d9"/><rect x="878.20" y="379.64" width="10.25" height="10.23" fill="#d9d9d9"/><rect x="888.35" y="379.64" width="10.25" height="10.23" fill="#d9d9d9"/><rect x="898.50" y="379.64" width="10.25" height="10.23" fill="#d9d9d9"/><rect x="908.65" y="379.64" width="10.25" height="10.23" fill="#d9d9d9"/><rect x="918.80" y="379.64" width="10.25" height="10.23" fill="#d9d9d9"/><rect x="928.95" y="379.64" width="10.25" height="10.23" fill="#d9d9d9"/><rect x="939.10" y="379.64" width="10.25" height="10.23" fill="#d9d9d9"/><rect x="949.25" y="379.64" width="10.25" height="10.23" fill="#d9d9d9"/><rect x="959.40" y="379.64" width="10.25" height="10.23" fill="#d9d9d9"/><rect x="969.55" y="379.64" width="10.25" height="10.23" fill="#d9d9d9"/><rect x="979.70" y="379.64" width="10.25" height="10.23" fill="#d9d9d9"/><rect x="989.85" y="379.64" width="10.25" height="10.23" fill="#d9d9d9"/><rect x="1000.00" y="379.64" width="10.25" height="10.23" fill="#d9d9d9"/><rect x="1010.15" y="379.64" width="10.25" height="10.23" fill="#d9d9d9"/><rect x="1020.30" y="379.64" width="10.25" height="10.23" fill="#d9d9d9"/><rect x="1030.45" y="379.64" width="10.25" height="10.23" fill="#d9d9d9"/><rect x="1040.60" y="379.64" width="10.25" height="10.23" fill="#d9d9d9"/><rect x="1050.75" y="379.64" width="10.25" height="10.23" fill="#d9d9d9"/><rect x="1060.90" y="379.64" width="10.25" height="10.23" fill="#d9d9d9"/><rect x="1071.05" y="379.64" width="10.25" height="10.23" fill="#d9d9d9"/><rect x="1081.20" y="379.64" width="10.25" height="10.23" fill="#d9d9d9"/><path d="M1091.35 379.64 h10.15 L1091.35 389.77z" fill="#00b52a"/><path d="M1101.50 379.64 v10.13 h-10.15z" fill="#0d65a8"/><path d="M1094.55 383.14 l1.8 1.2 M1097.65 385.84 l1.2 0.8" stroke="#0a3a40" stroke-width="0.7"/><rect x="817.30" y="389.77" width="10.25" height="10.23" fill="#d9d9d9"/><rect x="827.45" y="389.77" width="10.25" height="10.23" fill="#d9d9d9"/><rect x="837.60" y="389.77" width="10.25" height="10.23" fill="#d9d9d9"/><rect x="847.75" y="389.77" width="10.25" height="10.23" fill="#d9d9d9"/><rect x="857.90" y="389.77" width="10.25" height="10.23" fill="#d9d9d9"/><rect x="868.05" y="389.77" width="10.25" height="10.23" fill="#d9d9d9"/><rect x="878.20" y="389.77" width="10.25" height="10.23" fill="#d9d9d9"/><rect x="888.35" y="389.77" width="10.25" height="10.23" fill="#d9d9d9"/><rect x="898.50" y="389.77" width="10.25" height="10.23" fill="#d9d9d9"/><rect x="908.65" y="389.77" width="10.25" height="10.23" fill="#d9d9d9"/><rect x="918.80" y="389.77" width="10.25" height="10.23" fill="#d9d9d9"/><rect x="928.95" y="389.77" width="10.25" height="10.23" fill="#d9d9d9"/><rect x="939.10" y="389.77" width="10.25" height="10.23" fill="#d9d9d9"/><rect x="949.25" y="389.77" width="10.25" height="10.23" fill="#d9d9d9"/><rect x="959.40" y="389.77" width="10.25" height="10.23" fill="#d9d9d9"/><rect x="969.55" y="389.77" width="10.25" height="10.23" fill="#d9d9d9"/><rect x="979.70" y="389.77" width="10.25" height="10.23" fill="#d9d9d9"/><rect x="989.85" y="389.77" width="10.25" height="10.23" fill="#d9d9d9"/><rect x="1000.00" y="389.77" width="10.25" height="10.23" fill="#d9d9d9"/><rect x="1010.15" y="389.77" width="10.25" height="10.23" fill="#d9d9d9"/><rect x="1020.30" y="389.77" width="10.25" height="10.23" fill="#d9d9d9"/><rect x="1030.45" y="389.77" width="10.25" height="10.23" fill="#d9d9d9"/><rect x="1040.60" y="389.77" width="10.25" height="10.23" fill="#d9d9d9"/><rect x="1050.75" y="389.77" width="10.25" height="10.23" fill="#d9d9d9"/><rect x="1060.90" y="389.77" width="10.25" height="10.23" fill="#d9d9d9"/><rect x="1071.05" y="389.77" width="10.25" height="10.23" fill="#d9d9d9"/><rect x="1081.20" y="389.77" width="10.25" height="10.23" fill="#d9d9d9"/><path d="M1091.35 389.77 h10.15 L1091.35 399.90z" fill="#00b52a"/><path d="M1101.50 389.77 v10.13 h-10.15z" fill="#0d65a8"/><path d="M1094.55 393.27 l1.8 1.2 M1097.65 395.97 l1.2 0.8" stroke="#0a3a40" stroke-width="0.7"/><rect x="817.30" y="399.90" width="10.25" height="10.23" fill="#d9d9d9"/><rect x="827.45" y="399.90" width="10.25" height="10.23" fill="#d9d9d9"/><rect x="837.60" y="399.90" width="10.25" height="10.23" fill="#d9d9d9"/><rect x="847.75" y="399.90" width="10.25" height="10.23" fill="#d9d9d9"/><rect x="857.90" y="399.90" width="10.25" height="10.23" fill="#d9d9d9"/><rect x="868.05" y="399.90" width="10.25" height="10.23" fill="#d9d9d9"/><rect x="878.20" y="399.90" width="10.25" height="10.23" fill="#d9d9d9"/><rect x="888.35" y="399.90" width="10.25" height="10.23" fill="#d9d9d9"/><rect x="898.50" y="399.90" width="10.25" height="10.23" fill="#d9d9d9"/><rect x="908.65" y="399.90" width="10.25" height="10.23" fill="#d9d9d9"/><rect x="918.80" y="399.90" width="10.25" height="10.23" fill="#d9d9d9"/><rect x="928.95" y="399.90" width="10.25" height="10.23" fill="#d9d9d9"/><rect x="939.10" y="399.90" width="10.25" height="10.23" fill="#d9d9d9"/><rect x="949.25" y="399.90" width="10.25" height="10.23" fill="#d9d9d9"/><rect x="959.40" y="399.90" width="10.25" height="10.23" fill="#d9d9d9"/><rect x="969.55" y="399.90" width="10.25" height="10.23" fill="#d9d9d9"/><rect x="979.70" y="399.90" width="10.25" height="10.23" fill="#d9d9d9"/><rect x="989.85" y="399.90" width="10.25" height="10.23" fill="#d9d9d9"/><rect x="1000.00" y="399.90" width="10.25" height="10.23" fill="#d9d9d9"/><rect x="1010.15" y="399.90" width="10.25" height="10.23" fill="#d9d9d9"/><rect x="1020.30" y="399.90" width="10.25" height="10.23" fill="#d9d9d9"/><rect x="1030.45" y="399.90" width="10.25" height="10.23" fill="#d9d9d9"/><rect x="1040.60" y="399.90" width="10.25" height="10.23" fill="#d9d9d9"/><rect x="1050.75" y="399.90" width="10.25" height="10.23" fill="#d9d9d9"/><rect x="1060.90" y="399.90" width="10.25" height="10.23" fill="#d9d9d9"/><rect x="1071.05" y="399.90" width="10.25" height="10.23" fill="#d9d9d9"/><rect x="1081.20" y="399.90" width="10.25" height="10.23" fill="#d9d9d9"/><rect x="1091.35" y="399.90" width="10.25" height="10.23" fill="#d9d9d9"/><rect x="817.30" y="410.03" width="10.25" height="10.23" fill="#d9d9d9"/><rect x="827.45" y="410.03" width="10.25" height="10.23" fill="#d9d9d9"/><rect x="837.60" y="410.03" width="10.25" height="10.23" fill="#d9d9d9"/><rect x="847.75" y="410.03" width="10.25" height="10.23" fill="#d9d9d9"/><rect x="857.90" y="410.03" width="10.25" height="10.23" fill="#d9d9d9"/><rect x="868.05" y="410.03" width="10.25" height="10.23" fill="#d9d9d9"/><rect x="878.20" y="410.03" width="10.25" height="10.23" fill="#d9d9d9"/><rect x="888.35" y="410.03" width="10.25" height="10.23" fill="#d9d9d9"/><rect x="898.50" y="410.03" width="10.25" height="10.23" fill="#d9d9d9"/><rect x="908.65" y="410.03" width="10.25" height="10.23" fill="#d9d9d9"/><rect x="918.80" y="410.03" width="10.25" height="10.23" fill="#d9d9d9"/><rect x="928.95" y="410.03" width="10.25" height="10.23" fill="#d9d9d9"/><rect x="939.10" y="410.03" width="10.25" height="10.23" fill="#d9d9d9"/><rect x="949.25" y="410.03" width="10.25" height="10.23" fill="#d9d9d9"/><rect x="959.40" y="410.03" width="10.25" height="10.23" fill="#d9d9d9"/><rect x="969.55" y="410.03" width="10.25" height="10.23" fill="#d9d9d9"/><rect x="979.70" y="410.03" width="10.25" height="10.23" fill="#d9d9d9"/><rect x="989.85" y="410.03" width="10.25" height="10.23" fill="#d9d9d9"/><rect x="1000.00" y="410.03" width="10.25" height="10.23" fill="#d9d9d9"/><rect x="1010.15" y="410.03" width="10.25" height="10.23" fill="#d9d9d9"/><rect x="1020.30" y="410.03" width="10.25" height="10.23" fill="#d9d9d9"/><rect x="1030.45" y="410.03" width="10.25" height="10.23" fill="#d9d9d9"/><rect x="1040.60" y="410.03" width="10.25" height="10.23" fill="#d9d9d9"/><rect x="1050.75" y="410.03" width="10.25" height="10.23" fill="#d9d9d9"/><rect x="1060.90" y="410.03" width="10.25" height="10.23" fill="#d9d9d9"/><rect x="1071.05" y="410.03" width="10.25" height="10.23" fill="#d9d9d9"/><rect x="1081.20" y="410.03" width="10.25" height="10.23" fill="#d9d9d9"/><rect x="1091.35" y="410.03" width="10.25" height="10.23" fill="#d9d9d9"/><path d="M1101.50 410.03 h10.15 L1101.50 420.16z" fill="#00b52a"/><path d="M1111.65 410.03 v10.13 h-10.15z" fill="#0d65a8"/><path d="M1104.70 413.53 l1.8 1.2 M1107.80 416.23 l1.2 0.8" stroke="#0a3a40" stroke-width="0.7"/><rect x="817.30" y="420.16" width="10.25" height="10.23" fill="#d9d9d9"/><rect x="827.45" y="420.16" width="10.25" height="10.23" fill="#d9d9d9"/><rect x="837.60" y="420.16" width="10.25" height="10.23" fill="#d9d9d9"/><rect x="847.75" y="420.16" width="10.25" height="10.23" fill="#d9d9d9"/><rect x="857.90" y="420.16" width="10.25" height="10.23" fill="#d9d9d9"/><rect x="868.05" y="420.16" width="10.25" height="10.23" fill="#d9d9d9"/><rect x="878.20" y="420.16" width="10.25" height="10.23" fill="#d9d9d9"/><rect x="888.35" y="420.16" width="10.25" height="10.23" fill="#d9d9d9"/><rect x="898.50" y="420.16" width="10.25" height="10.23" fill="#d9d9d9"/><rect x="908.65" y="420.16" width="10.25" height="10.23" fill="#d9d9d9"/><rect x="918.80" y="420.16" width="10.25" height="10.23" fill="#d9d9d9"/><rect x="928.95" y="420.16" width="10.25" height="10.23" fill="#d9d9d9"/><rect x="939.10" y="420.16" width="10.25" height="10.23" fill="#d9d9d9"/><rect x="949.25" y="420.16" width="10.25" height="10.23" fill="#d9d9d9"/><rect x="959.40" y="420.16" width="10.25" height="10.23" fill="#d9d9d9"/><rect x="969.55" y="420.16" width="10.25" height="10.23" fill="#d9d9d9"/><rect x="979.70" y="420.16" width="10.25" height="10.23" fill="#d9d9d9"/><rect x="989.85" y="420.16" width="10.25" height="10.23" fill="#d9d9d9"/><rect x="1000.00" y="420.16" width="10.25" height="10.23" fill="#d9d9d9"/><rect x="1010.15" y="420.16" width="10.25" height="10.23" fill="#d9d9d9"/><rect x="1020.30" y="420.16" width="10.25" height="10.23" fill="#d9d9d9"/><rect x="1030.45" y="420.16" width="10.25" height="10.23" fill="#d9d9d9"/><rect x="1040.60" y="420.16" width="10.25" height="10.23" fill="#d9d9d9"/><rect x="1050.75" y="420.16" width="10.25" height="10.23" fill="#d9d9d9"/><rect x="1060.90" y="420.16" width="10.25" height="10.23" fill="#d9d9d9"/><rect x="1071.05" y="420.16" width="10.25" height="10.23" fill="#d9d9d9"/><rect x="1081.20" y="420.16" width="10.25" height="10.23" fill="#d9d9d9"/><path d="M1091.35 420.16 h10.15 L1091.35 430.29z" fill="#00b52a"/><path d="M1101.50 420.16 v10.13 h-10.15z" fill="#0d65a8"/><path d="M1094.55 423.66 l1.8 1.2 M1097.65 426.36 l1.2 0.8" stroke="#0a3a40" stroke-width="0.7"/><path d="M1101.50 420.16 h10.15 L1101.50 430.29z" fill="#00b52a"/><path d="M1111.65 420.16 v10.13 h-10.15z" fill="#0d65a8"/><path d="M1104.70 423.66 l1.8 1.2 M1107.80 426.36 l1.2 0.8" stroke="#0a3a40" stroke-width="0.7"/><rect x="816.80" y="197.3" width="1.0" height="232.99" fill="#5e5e5e"/><rect x="826.95" y="197.3" width="1.0" height="232.99" fill="#5e5e5e"/><rect x="837.10" y="197.3" width="1.0" height="232.99" fill="#5e5e5e"/><rect x="847.25" y="197.3" width="1.0" height="232.99" fill="#5e5e5e"/><rect x="857.40" y="197.3" width="1.0" height="232.99" fill="#5e5e5e"/><rect x="867.55" y="197.3" width="1.0" height="232.99" fill="#5e5e5e"/><rect x="877.70" y="197.3" width="1.0" height="232.99" fill="#5e5e5e"/><rect x="887.85" y="197.3" width="1.0" height="232.99" fill="#5e5e5e"/><rect x="898.00" y="197.3" width="1.0" height="232.99" fill="#5e5e5e"/><rect x="908.15" y="197.3" width="1.0" height="232.99" fill="#5e5e5e"/><rect x="918.30" y="197.3" width="1.0" height="232.99" fill="#5e5e5e"/><rect x="928.45" y="197.3" width="1.0" height="232.99" fill="#5e5e5e"/><rect x="938.60" y="197.3" width="1.0" height="232.99" fill="#5e5e5e"/><rect x="948.75" y="197.3" width="1.0" height="232.99" fill="#5e5e5e"/><rect x="958.90" y="197.3" width="1.0" height="232.99" fill="#5e5e5e"/><rect x="969.05" y="197.3" width="1.0" height="232.99" fill="#5e5e5e"/><rect x="979.20" y="197.3" width="1.0" height="232.99" fill="#5e5e5e"/><rect x="989.35" y="197.3" width="1.0" height="232.99" fill="#5e5e5e"/><rect x="999.50" y="197.3" width="1.0" height="232.99" fill="#5e5e5e"/><rect x="1009.65" y="197.3" width="1.0" height="232.99" fill="#5e5e5e"/><rect x="1019.80" y="197.3" width="1.0" height="232.99" fill="#5e5e5e"/><rect x="1029.95" y="197.3" width="1.0" height="232.99" fill="#5e5e5e"/><rect x="1040.10" y="197.3" width="1.0" height="232.99" fill="#5e5e5e"/><rect x="1050.25" y="197.3" width="1.0" height="232.99" fill="#5e5e5e"/><rect x="1060.40" y="197.3" width="1.0" height="232.99" fill="#5e5e5e"/><rect x="1070.55" y="197.3" width="1.0" height="232.99" fill="#5e5e5e"/><rect x="1080.70" y="197.3" width="1.0" height="232.99" fill="#5e5e5e"/><rect x="1090.85" y="197.3" width="1.0" height="232.99" fill="#5e5e5e"/><rect x="1101.00" y="197.3" width="1.0" height="232.99" fill="#5e5e5e"/><rect x="1111.15" y="197.3" width="1.0" height="232.99" fill="#5e5e5e"/><rect x="814.1" y="196.80" width="297.55" height="1.0" fill="#5e5e5e"/><rect x="814.1" y="206.93" width="297.55" height="1.0" fill="#5e5e5e"/><rect x="814.1" y="217.06" width="297.55" height="1.0" fill="#5e5e5e"/><rect x="814.1" y="227.19" width="297.55" height="1.0" fill="#5e5e5e"/><rect x="814.1" y="237.32" width="297.55" height="1.0" fill="#5e5e5e"/><rect x="814.1" y="247.45" width="297.55" height="1.0" fill="#5e5e5e"/><rect x="814.1" y="257.58" width="297.55" height="1.0" fill="#5e5e5e"/><rect x="814.1" y="267.71" width="297.55" height="1.0" fill="#5e5e5e"/><rect x="814.1" y="277.84" width="297.55" height="1.0" fill="#5e5e5e"/><rect x="814.1" y="287.97" width="297.55" height="1.0" fill="#5e5e5e"/><rect x="814.1" y="298.10" width="297.55" height="1.0" fill="#5e5e5e"/><rect x="814.1" y="308.23" width="297.55" height="1.0" fill="#5e5e5e"/><rect x="814.1" y="318.36" width="297.55" height="1.0" fill="#5e5e5e"/><rect x="814.1" y="328.49" width="297.55" height="1.0" fill="#5e5e5e"/><rect x="814.1" y="338.62" width="297.55" height="1.0" fill="#5e5e5e"/><rect x="814.1" y="348.75" width="297.55" height="1.0" fill="#5e5e5e"/><rect x="814.1" y="358.88" width="297.55" height="1.0" fill="#5e5e5e"/><rect x="814.1" y="369.01" width="297.55" height="1.0" fill="#5e5e5e"/><rect x="814.1" y="379.14" width="297.55" height="1.0" fill="#5e5e5e"/><rect x="814.1" y="389.27" width="297.55" height="1.0" fill="#5e5e5e"/><rect x="814.1" y="399.40" width="297.55" height="1.0" fill="#5e5e5e"/><rect x="814.1" y="409.53" width="297.55" height="1.0" fill="#5e5e5e"/><rect x="814.1" y="419.66" width="297.55" height="1.0" fill="#5e5e5e"/><rect x="814.1" y="429.79" width="297.55" height="1.0" fill="#5e5e5e"/><rect x="814" y="169.2" width="318.3" height="0.7" fill="#d0d0d0"/><rect x="809.2" y="174.3" width="0.7" height="256" fill="#d0d0d0"/><path d="M846.7 174.2 A332.3 332.3 0 0 1 1132.6 375" fill="none" stroke="#a8a8a8" stroke-width="1.2"/><rect x="1187.4" y="176.6" width="9.2" height="9.2" fill="#1a69aa"/><rect x="1187.4" y="185.8" width="9.2" height="9.2" fill="#e8e8e8"/><rect x="1187.4" y="215.8" width="9.2" height="9.2" fill="#00bb22"/></svg>
<div class="t" style="left:660px;width:600px;text-align:center;top:134.52px;font-size:6.3px;color:#444;font-weight:bold;line-height:7.56px;">2022-06-29 11:54:25.974_Q2FP95_24</div>
<div class="t" style="left:814.1px;top:162.38px;font-size:5.2px;color:#666;font-weight:normal;line-height:6.24px;">0</div>
<div class="t" style="left:522.575px;width:600px;text-align:center;top:162.38px;font-size:5.2px;color:#666;font-weight:normal;line-height:6.24px;">131</div>
<div class="t" style="left:532.725px;width:600px;text-align:center;top:162.38px;font-size:5.2px;color:#666;font-weight:normal;line-height:6.24px;">132</div>
<div class="t" style="left:542.875px;width:600px;text-align:center;top:162.38px;font-size:5.2px;color:#666;font-weight:normal;line-height:6.24px;">133</div>
<div class="t" style="left:553.0250000000001px;width:600px;text-align:center;top:162.38px;font-size:5.2px;color:#666;font-weight:normal;line-height:6.24px;">134</div>
<div class="t" style="left:563.1750000000001px;width:600px;text-align:center;top:162.38px;font-size:5.2px;color:#666;font-weight:normal;line-height:6.24px;">135</div>
<div class="t" style="left:573.325px;width:600px;text-align:center;top:162.38px;font-size:5.2px;color:#666;font-weight:normal;line-height:6.24px;">136</div>
<div class="t" style="left:583.475px;width:600px;text-align:center;top:162.38px;font-size:5.2px;color:#666;font-weight:normal;line-height:6.24px;">137</div>
<div class="t" style="left:593.625px;width:600px;text-align:center;top:162.38px;font-size:5.2px;color:#666;font-weight:normal;line-height:6.24px;">138</div>
<div class="t" style="left:603.7750000000001px;width:600px;text-align:center;top:162.38px;font-size:5.2px;color:#666;font-weight:normal;line-height:6.24px;">139</div>
<div class="t" style="left:613.9250000000001px;width:600px;text-align:center;top:162.38px;font-size:5.2px;color:#666;font-weight:normal;line-height:6.24px;">140</div>
<div class="t" style="left:624.075px;width:600px;text-align:center;top:162.38px;font-size:5.2px;color:#666;font-weight:normal;line-height:6.24px;">141</div>
<div class="t" style="left:634.225px;width:600px;text-align:center;top:162.38px;font-size:5.2px;color:#666;font-weight:normal;line-height:6.24px;">142</div>
<div class="t" style="left:644.375px;width:600px;text-align:center;top:162.38px;font-size:5.2px;color:#666;font-weight:normal;line-height:6.24px;">143</div>
<div class="t" style="left:654.5250000000001px;width:600px;text-align:center;top:162.38px;font-size:5.2px;color:#666;font-weight:normal;line-height:6.24px;">144</div>
<div class="t" style="left:664.6750000000001px;width:600px;text-align:center;top:162.38px;font-size:5.2px;color:#666;font-weight:normal;line-height:6.24px;">145</div>
<div class="t" style="left:674.825px;width:600px;text-align:center;top:162.38px;font-size:5.2px;color:#666;font-weight:normal;line-height:6.24px;">146</div>
<div class="t" style="left:684.975px;width:600px;text-align:center;top:162.38px;font-size:5.2px;color:#666;font-weight:normal;line-height:6.24px;">147</div>
<div class="t" style="left:695.125px;width:600px;text-align:center;top:162.38px;font-size:5.2px;color:#666;font-weight:normal;line-height:6.24px;">148</div>
<div class="t" style="left:705.2750000000001px;width:600px;text-align:center;top:162.38px;font-size:5.2px;color:#666;font-weight:normal;line-height:6.24px;">149</div>
<div class="t" style="left:715.4250000000001px;width:600px;text-align:center;top:162.38px;font-size:5.2px;color:#666;font-weight:normal;line-height:6.24px;">150</div>
<div class="t" style="left:725.575px;width:600px;text-align:center;top:162.38px;font-size:5.2px;color:#666;font-weight:normal;line-height:6.24px;">151</div>
<div class="t" style="left:735.7250000000001px;width:600px;text-align:center;top:162.38px;font-size:5.2px;color:#666;font-weight:normal;line-height:6.24px;">152</div>
<div class="t" style="left:745.875px;width:600px;text-align:center;top:162.38px;font-size:5.2px;color:#666;font-weight:normal;line-height:6.24px;">153</div>
<div class="t" style="left:756.0250000000001px;width:600px;text-align:center;top:162.38px;font-size:5.2px;color:#666;font-weight:normal;line-height:6.24px;">154</div>
<div class="t" style="left:766.1750000000002px;width:600px;text-align:center;top:162.38px;font-size:5.2px;color:#666;font-weight:normal;line-height:6.24px;">155</div>
<div class="t" style="left:776.325px;width:600px;text-align:center;top:162.38px;font-size:5.2px;color:#666;font-weight:normal;line-height:6.24px;">156</div>
<div class="t" style="left:786.4750000000001px;width:600px;text-align:center;top:162.38px;font-size:5.2px;color:#666;font-weight:normal;line-height:6.24px;">157</div>
<div class="t" style="left:796.625px;width:600px;text-align:center;top:162.38px;font-size:5.2px;color:#666;font-weight:normal;line-height:6.24px;">158</div>
<div class="t" style="left:806.7750000000001px;width:600px;text-align:center;top:162.38px;font-size:5.2px;color:#666;font-weight:normal;line-height:6.24px;">159</div>
<div class="t" style="left:208.20000000000005px;width:600px;text-align:right;top:200.65px;font-size:5.2px;color:#666;font-weight:normal;line-height:6.24px;">104</div>
<div class="t" style="left:208.20000000000005px;width:600px;text-align:right;top:210.78px;font-size:5.2px;color:#666;font-weight:normal;line-height:6.24px;">105</div>
<div class="t" style="left:208.20000000000005px;width:600px;text-align:right;top:220.91px;font-size:5.2px;color:#666;font-weight:normal;line-height:6.24px;">106</div>
<div class="t" style="left:208.20000000000005px;width:600px;text-align:right;top:231.03px;font-size:5.2px;color:#666;font-weight:normal;line-height:6.24px;">107</div>
<div class="t" style="left:208.20000000000005px;width:600px;text-align:right;top:241.17px;font-size:5.2px;color:#666;font-weight:normal;line-height:6.24px;">108</div>
<div class="t" style="left:208.20000000000005px;width:600px;text-align:right;top:251.30px;font-size:5.2px;color:#666;font-weight:normal;line-height:6.24px;">109</div>
<div class="t" style="left:208.20000000000005px;width:600px;text-align:right;top:261.43px;font-size:5.2px;color:#666;font-weight:normal;line-height:6.24px;">110</div>
<div class="t" style="left:208.20000000000005px;width:600px;text-align:right;top:271.56px;font-size:5.2px;color:#666;font-weight:normal;line-height:6.24px;">111</div>
<div class="t" style="left:208.20000000000005px;width:600px;text-align:right;top:281.69px;font-size:5.2px;color:#666;font-weight:normal;line-height:6.24px;">112</div>
<div class="t" style="left:208.20000000000005px;width:600px;text-align:right;top:291.82px;font-size:5.2px;color:#666;font-weight:normal;line-height:6.24px;">113</div>
<div class="t" style="left:208.20000000000005px;width:600px;text-align:right;top:301.95px;font-size:5.2px;color:#666;font-weight:normal;line-height:6.24px;">114</div>
<div class="t" style="left:208.20000000000005px;width:600px;text-align:right;top:312.08px;font-size:5.2px;color:#666;font-weight:normal;line-height:6.24px;">115</div>
<div class="t" style="left:208.20000000000005px;width:600px;text-align:right;top:322.21px;font-size:5.2px;color:#666;font-weight:normal;line-height:6.24px;">116</div>
<div class="t" style="left:208.20000000000005px;width:600px;text-align:right;top:332.34px;font-size:5.2px;color:#666;font-weight:normal;line-height:6.24px;">117</div>
<div class="t" style="left:208.20000000000005px;width:600px;text-align:right;top:342.47px;font-size:5.2px;color:#666;font-weight:normal;line-height:6.24px;">118</div>
<div class="t" style="left:208.20000000000005px;width:600px;text-align:right;top:352.60px;font-size:5.2px;color:#666;font-weight:normal;line-height:6.24px;">119</div>
<div class="t" style="left:208.20000000000005px;width:600px;text-align:right;top:362.73px;font-size:5.2px;color:#666;font-weight:normal;line-height:6.24px;">120</div>
<div class="t" style="left:208.20000000000005px;width:600px;text-align:right;top:372.86px;font-size:5.2px;color:#666;font-weight:normal;line-height:6.24px;">121</div>
<div class="t" style="left:208.20000000000005px;width:600px;text-align:right;top:382.99px;font-size:5.2px;color:#666;font-weight:normal;line-height:6.24px;">122</div>
<div class="t" style="left:208.20000000000005px;width:600px;text-align:right;top:393.12px;font-size:5.2px;color:#666;font-weight:normal;line-height:6.24px;">123</div>
<div class="t" style="left:208.20000000000005px;width:600px;text-align:right;top:403.25px;font-size:5.2px;color:#666;font-weight:normal;line-height:6.24px;">124</div>
<div class="t" style="left:208.20000000000005px;width:600px;text-align:right;top:413.38px;font-size:5.2px;color:#666;font-weight:normal;line-height:6.24px;">125</div>
<div class="t" style="left:208.20000000000005px;width:600px;text-align:right;top:423.51px;font-size:5.2px;color:#666;font-weight:normal;line-height:6.24px;">126</div>
<div class="t" style="left:1187.4px;top:160.70px;font-size:7.5px;color:#444;font-weight:normal;line-height:9.00px;-webkit-text-stroke:0.3px #444;">Bin Name</div>
<div class="t" style="left:1198.9px;top:178.70px;font-size:4.5px;color:#777;font-weight:normal;line-height:5.40px;">99</div>
<div class="t" style="left:1199px;top:187.62px;font-size:5.3px;color:#777;font-weight:normal;line-height:6.36px;">Unselected Bin</div>
<div class="t" style="left:1187.4px;top:199.70px;font-size:7.5px;color:#444;font-weight:normal;line-height:9.00px;-webkit-text-stroke:0.3px #444;">Retest Bin</div>
<div class="t" style="left:1201.5px;top:217.40px;font-size:5px;color:#777;font-weight:normal;line-height:6.00px;">1</div>
<svg width="1268" height="650" style="position:absolute;left:0;top:0"><g transform="translate(1118.5,299.6) scale(1.02)" fill="none" stroke="#16c234" stroke-width="1.0" stroke-linecap="square" stroke-linejoin="miter"><path d="M6 0.2 L6.8 1.4"/><path d="M2.4 2 H10 V7.1 H2.4 Z"/><path d="M2.4 4.55 H10"/><path d="M2.4 7.1 V11.3 L5 10.1"/><path d="M5.8 7.6 Q7.6 10.3 11.4 11.5"/><path d="M10.2 7.9 L7.6 9.4"/></g><g transform="translate(1131.2,299.6) scale(1.02)" fill="none" stroke="#16c234" stroke-width="1.0" stroke-linecap="square"><path d="M3 0.8 H9.2 V4.7 H3 Z"/><path d="M0.9 6.3 H5.4 V11.3 H0.9 Z"/><path d="M6.8 6.3 H11.4 V11.3 H6.8 Z"/></g><g transform="translate(1143.6,299.6) scale(1.02)" fill="none" stroke="#16c234" stroke-width="0.95" stroke-linecap="square"><path d="M0.6 2.4 H5"/><path d="M2.6 0.4 L1.2 6.4 H5"/><path d="M3.1 3.8 V11.6"/><path d="M0.5 9 L5.3 8"/><path d="M6.2 2.8 H11.6"/><path d="M5.8 5.3 H12"/><path d="M9 0.3 L7.6 8 H11.2 L9.2 10.4"/><path d="M7.8 9.4 L10.6 11.6"/></g><text x="1156.3" y="310.1" font-family="Liberation Sans" font-size="13.8" fill="#16c234" stroke="#16c234" stroke-width="0.35" textLength="31.6" lengthAdjust="spacingAndGlyphs">DPAT</text></svg>
<svg width="1268" height="650" style="position:absolute;left:0;top:0"><rect x="596" y="115" width="8.3" height="8.65" fill="#128a3e"/><rect x="596" y="123.6" width="8.3" height="8.65" fill="#0b9b36"/><rect x="596" y="132.2" width="8.3" height="8.65" fill="#05b42b"/><rect x="596" y="140.8" width="8.3" height="8.65" fill="#00d41e"/><rect x="596" y="149.4" width="8.3" height="8.65" fill="#00f812"/><rect x="596" y="158" width="8.3" height="8.85" fill="#ff0c0c"/></svg>
<div class="t" style="left:307px;width:600px;text-align:center;top:101.20px;font-size:6px;color:#555;font-weight:bold;line-height:7.20px;">Yield %</div>
<div class="t" style="left:608.2px;top:113.04px;font-size:4.6px;color:#666;font-weight:normal;line-height:5.52px;">100</div>
<div class="t" style="left:608.2px;top:121.64px;font-size:4.6px;color:#666;font-weight:normal;line-height:5.52px;">100</div>
<div class="t" style="left:608.2px;top:130.04px;font-size:4.6px;color:#666;font-weight:normal;line-height:5.52px;">80</div>
<div class="t" style="left:608.2px;top:138.44px;font-size:4.6px;color:#666;font-weight:normal;line-height:5.52px;">60</div>
<div class="t" style="left:608.2px;top:147.24px;font-size:4.6px;color:#666;font-weight:normal;line-height:5.52px;">40</div>
<div class="t" style="left:608.2px;top:155.84px;font-size:4.6px;color:#666;font-weight:normal;line-height:5.52px;">20</div>
<div class="t" style="left:608.2px;top:164.04px;font-size:4.6px;color:#666;font-weight:normal;line-height:5.52px;">0</div>
</body></html>
